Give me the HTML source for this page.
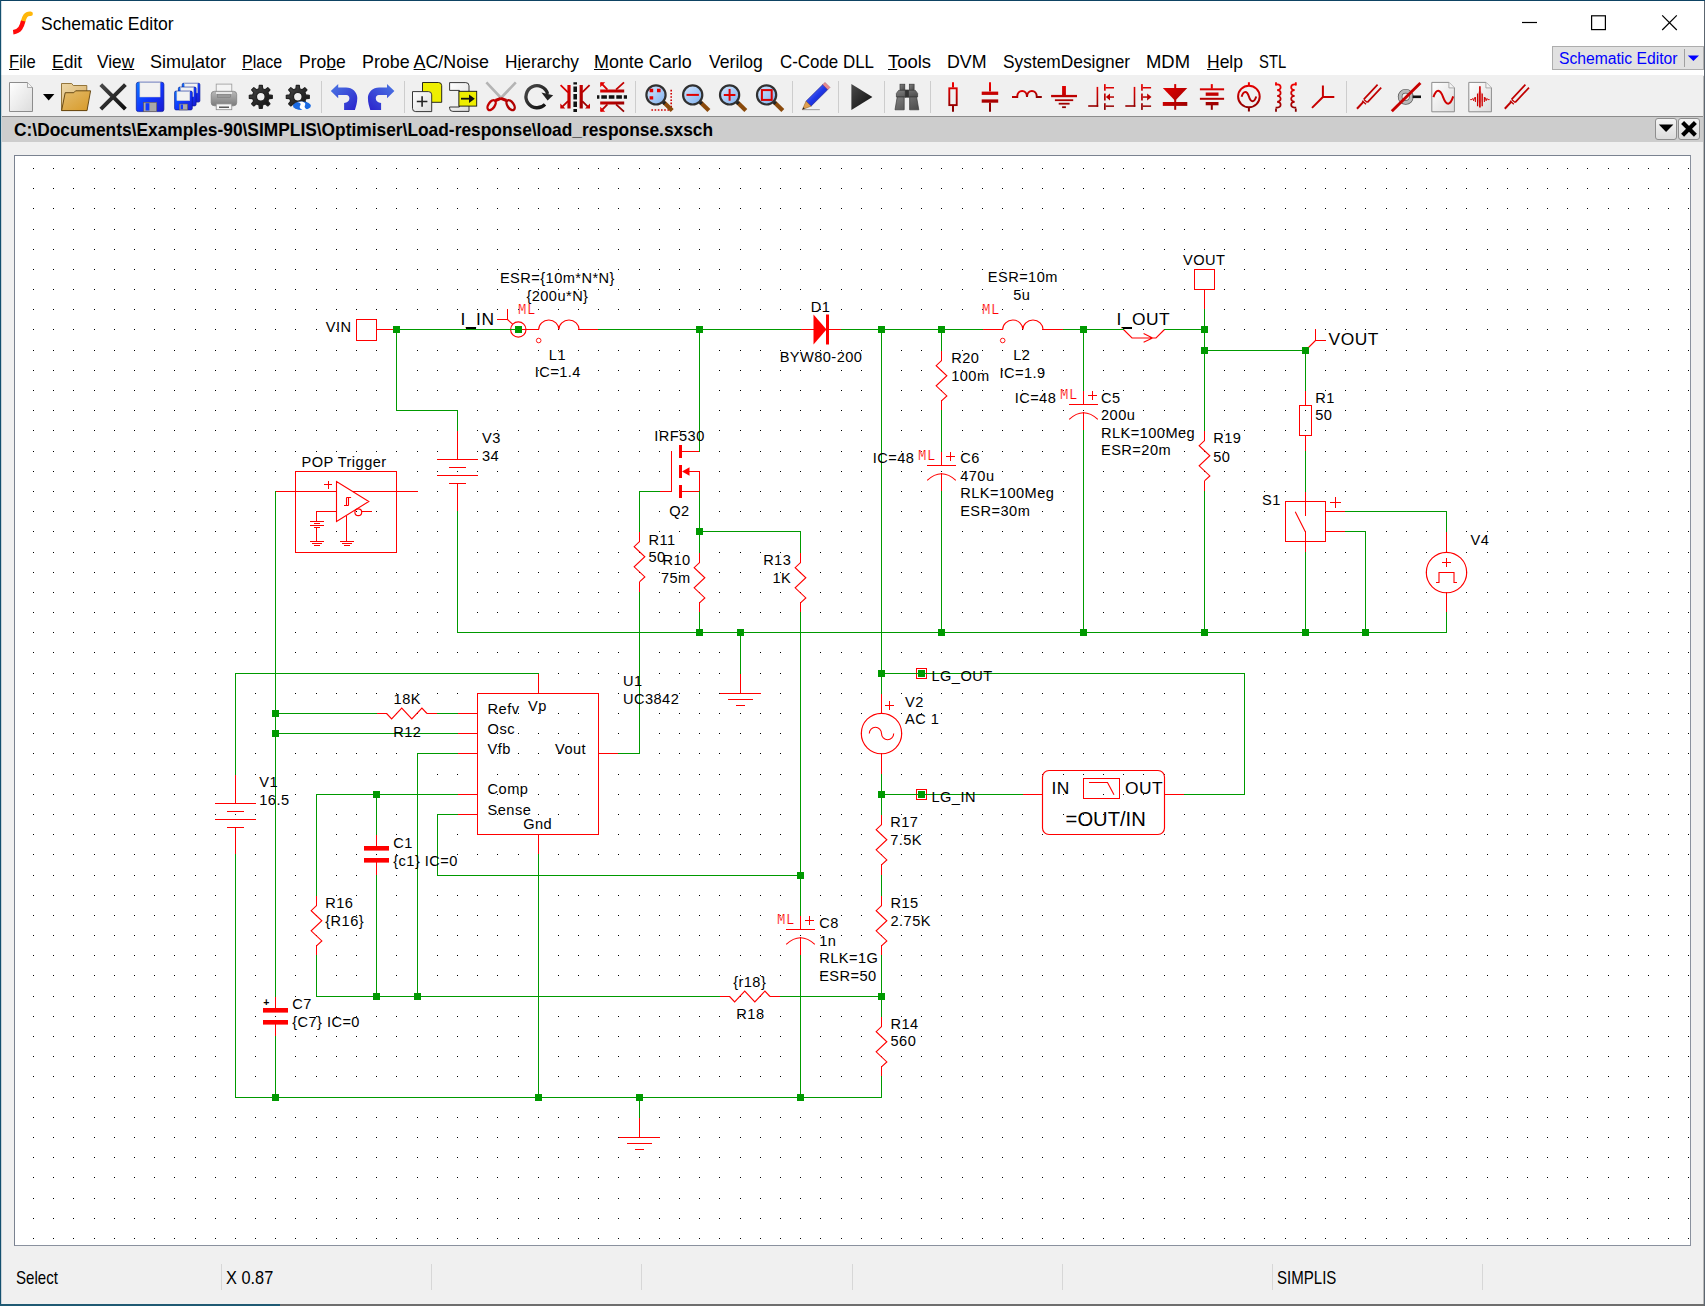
<!DOCTYPE html>
<html><head><meta charset="utf-8"><title>Schematic Editor</title>
<style>
html,body{margin:0;padding:0}
body{width:1705px;height:1306px;position:relative;overflow:hidden;background:#f0f0f0;font-family:"Liberation Sans",sans-serif;color:#000}
.abs{position:absolute}
#titlebar{left:0;top:0;width:1705px;height:43px;background:#fff}
#menubar{left:0;top:43px;width:1705px;height:32px;background:#fff;font-size:18.2px}
#menubar span{position:absolute;top:10px;white-space:nowrap;line-height:20px}
u{text-decoration:underline;text-underline-offset:1.2px;text-decoration-thickness:1px}
#toolbar{left:0;top:75px;width:1705px;height:41px;background:#f0f0f0}
#tabbar{left:2px;top:116px;width:1702px;height:26px;background:#cdcdcd;border-top:1px solid #8c8c8c;box-sizing:border-box}
#canvas{left:14px;top:155px;width:1675px;height:1089px;background:#fff;border:1px solid #7a8290;border-right-color:#8a919e;border-bottom-color:#8a919e}
#status{left:0;top:1246px;width:1705px;height:60px;font-size:16.2px}
#status span{position:absolute;top:27px;line-height:20px}
.sep{position:absolute;top:1264px;width:1px;height:26px;background:#d7d7d7}
#combo{left:1552px;top:46px;width:150px;height:22px;background:#e1e1e1;border:1px solid #adadad;box-sizing:content-box}
.tbtn{position:absolute;top:118px;width:20px;height:20px;border:1px solid #8e8e8e;border-radius:3px;background:linear-gradient(#f4f4f4,#dcdcdc);box-sizing:content-box}
svg{position:absolute;left:0;top:0}
</style></head><body>
<div id="titlebar" class="abs"></div>
<div class="abs" style="left:41.2px;top:14.0px;font-size:18.3px;line-height:20px;transform:scaleX(0.9600);transform-origin:0 0;white-space:nowrap;">Schematic Editor</div>
<div id="menubar" class="abs"></div><div class="abs" style="left:9.2px;top:51.8px;font-size:18.2px;line-height:20px;transform:scaleX(0.9104);transform-origin:0 0;white-space:nowrap;"><u>F</u>ile</div><div class="abs" style="left:51.5px;top:51.8px;font-size:18.2px;line-height:20px;transform:scaleX(0.9629);transform-origin:0 0;white-space:nowrap;"><u>E</u>dit</div><div class="abs" style="left:97.4px;top:51.8px;font-size:18.2px;line-height:20px;transform:scaleX(0.9534);transform-origin:0 0;white-space:nowrap;">Vie<u>w</u></div><div class="abs" style="left:150.4px;top:51.8px;font-size:18.2px;line-height:20px;transform:scaleX(0.9899);transform-origin:0 0;white-space:nowrap;">Simu<u>l</u>ator</div><div class="abs" style="left:242.3px;top:51.8px;font-size:18.2px;line-height:20px;transform:scaleX(0.8830);transform-origin:0 0;white-space:nowrap;"><u>P</u>lace</div><div class="abs" style="left:298.7px;top:51.8px;font-size:18.2px;line-height:20px;transform:scaleX(0.9636);transform-origin:0 0;white-space:nowrap;">Pro<u>b</u>e</div><div class="abs" style="left:361.7px;top:51.8px;font-size:18.2px;line-height:20px;transform:scaleX(0.9807);transform-origin:0 0;white-space:nowrap;">Probe <u>A</u>C/Noise</div><div class="abs" style="left:504.5px;top:51.8px;font-size:18.2px;line-height:20px;transform:scaleX(0.9502);transform-origin:0 0;white-space:nowrap;">H<u>i</u>erarchy</div><div class="abs" style="left:594.3px;top:51.8px;font-size:18.2px;line-height:20px;transform:scaleX(0.9855);transform-origin:0 0;white-space:nowrap;"><u>M</u>onte Carlo</div><div class="abs" style="left:708.8px;top:51.8px;font-size:18.2px;line-height:20px;transform:scaleX(0.9667);transform-origin:0 0;white-space:nowrap;">Verilog</div><div class="abs" style="left:779.5px;top:51.8px;font-size:18.2px;line-height:20px;transform:scaleX(0.9292);transform-origin:0 0;white-space:nowrap;">C-Code DLL</div><div class="abs" style="left:888.3px;top:51.8px;font-size:18.2px;line-height:20px;transform:scaleX(1.0144);transform-origin:0 0;white-space:nowrap;"><u>T</u>ools</div><div class="abs" style="left:946.8px;top:51.8px;font-size:18.2px;line-height:20px;transform:scaleX(0.9791);transform-origin:0 0;white-space:nowrap;">DVM</div><div class="abs" style="left:1002.8px;top:51.8px;font-size:18.2px;line-height:20px;transform:scaleX(0.9527);transform-origin:0 0;white-space:nowrap;">SystemDesigner</div><div class="abs" style="left:1146.0px;top:51.8px;font-size:18.2px;line-height:20px;transform:scaleX(1.0123);transform-origin:0 0;white-space:nowrap;">MDM</div><div class="abs" style="left:1207.0px;top:51.8px;font-size:18.2px;line-height:20px;transform:scaleX(0.9617);transform-origin:0 0;white-space:nowrap;"><u>H</u>elp</div><div class="abs" style="left:1259.2px;top:51.8px;font-size:18.2px;line-height:20px;transform:scaleX(0.8149);transform-origin:0 0;white-space:nowrap;">STL</div>
<div id="combo" class="abs"><div class="abs" style="left:131px;top:2px;width:1px;height:18px;background:#a0a0a0"></div></div><div class="abs" style="left:1559.4px;top:48.0px;font-size:17.3px;line-height:20px;transform:scaleX(0.9070);transform-origin:0 0;white-space:nowrap;color:#0000ff;">Schematic Editor</div>
<div id="toolbar" class="abs"></div>
<div id="tabbar" class="abs"></div><div class="abs" style="left:14.2px;top:119.8px;font-size:17.9px;line-height:20px;transform:scaleX(0.9699);transform-origin:0 0;white-space:nowrap;font-weight:bold;">C:\Documents\Examples-90\SIMPLIS\Optimiser\Load-response\load_response.sxsch</div>
<div class="tbtn" style="left:1655px"></div><div class="tbtn" style="left:1678px"></div>
<div id="canvas" class="abs"></div>
<div id="status" class="abs"></div><div class="abs" style="left:16.2px;top:1268.1px;font-size:17.7px;line-height:20px;transform:scaleX(0.8517);transform-origin:0 0;white-space:nowrap;">Select</div><div class="abs" style="left:225.8px;top:1268.1px;font-size:17.7px;line-height:20px;transform:scaleX(0.9243);transform-origin:0 0;white-space:nowrap;">X 0.87</div><div class="abs" style="left:1277.4px;top:1267.9px;font-size:17.7px;line-height:20px;transform:scaleX(0.8505);transform-origin:0 0;white-space:nowrap;">SIMPLIS</div>
<div class="sep" style="left:221px"></div><div class="sep" style="left:431px"></div><div class="sep" style="left:641px"></div><div class="sep" style="left:852px"></div><div class="sep" style="left:1062px"></div><div class="sep" style="left:1272px"></div><div class="sep" style="left:1482px"></div>
<svg width="1705" height="1306" viewBox="0 0 1705 1306">
<g id="schem">
<path d="M33 168.5h1m19 0h1m19 0h1m20 0h1m19 0h1m19 0h1m19 0h1m19 0h1m20 0h1m19 0h1m19 0h1m19 0h1m19 0h1m19 0h1m20 0h1m19 0h1m19 0h1m19 0h1m19 0h1m20 0h1m19 0h1m19 0h1m19 0h1m19 0h1m20 0h1m19 0h1m19 0h1m19 0h1m19 0h1m19 0h1m20 0h1m19 0h1m19 0h1m19 0h1m19 0h1m20 0h1m19 0h1m19 0h1m19 0h1m19 0h1m20 0h1m19 0h1m19 0h1m19 0h1m19 0h1m19 0h1m20 0h1m19 0h1m19 0h1m19 0h1m19 0h1m20 0h1m19 0h1m19 0h1m19 0h1m19 0h1m20 0h1m19 0h1m19 0h1m19 0h1m19 0h1m19 0h1m20 0h1m19 0h1m19 0h1m19 0h1m19 0h1m20 0h1m19 0h1m19 0h1m19 0h1m19 0h1m20 0h1m19 0h1m19 0h1m19 0h1m19 0h1m19 0h1m20 0h1m19 0h1m19 0h1m19 0h1m19 0h1M33 188.5h1m19 0h1m19 0h1m20 0h1m19 0h1m19 0h1m19 0h1m19 0h1m20 0h1m19 0h1m19 0h1m19 0h1m19 0h1m19 0h1m20 0h1m19 0h1m19 0h1m19 0h1m19 0h1m20 0h1m19 0h1m19 0h1m19 0h1m19 0h1m20 0h1m19 0h1m19 0h1m19 0h1m19 0h1m19 0h1m20 0h1m19 0h1m19 0h1m19 0h1m19 0h1m20 0h1m19 0h1m19 0h1m19 0h1m19 0h1m20 0h1m19 0h1m19 0h1m19 0h1m19 0h1m19 0h1m20 0h1m19 0h1m19 0h1m19 0h1m19 0h1m20 0h1m19 0h1m19 0h1m19 0h1m19 0h1m20 0h1m19 0h1m19 0h1m19 0h1m19 0h1m19 0h1m20 0h1m19 0h1m19 0h1m19 0h1m19 0h1m20 0h1m19 0h1m19 0h1m19 0h1m19 0h1m20 0h1m19 0h1m19 0h1m19 0h1m19 0h1m19 0h1m20 0h1m19 0h1m19 0h1m19 0h1m19 0h1M33 208.5h1m19 0h1m19 0h1m20 0h1m19 0h1m19 0h1m19 0h1m19 0h1m20 0h1m19 0h1m19 0h1m19 0h1m19 0h1m19 0h1m20 0h1m19 0h1m19 0h1m19 0h1m19 0h1m20 0h1m19 0h1m19 0h1m19 0h1m19 0h1m20 0h1m19 0h1m19 0h1m19 0h1m19 0h1m19 0h1m20 0h1m19 0h1m19 0h1m19 0h1m19 0h1m20 0h1m19 0h1m19 0h1m19 0h1m19 0h1m20 0h1m19 0h1m19 0h1m19 0h1m19 0h1m19 0h1m20 0h1m19 0h1m19 0h1m19 0h1m19 0h1m20 0h1m19 0h1m19 0h1m19 0h1m19 0h1m20 0h1m19 0h1m19 0h1m19 0h1m19 0h1m19 0h1m20 0h1m19 0h1m19 0h1m19 0h1m19 0h1m20 0h1m19 0h1m19 0h1m19 0h1m19 0h1m20 0h1m19 0h1m19 0h1m19 0h1m19 0h1m19 0h1m20 0h1m19 0h1m19 0h1m19 0h1m19 0h1M33 229.5h1m19 0h1m19 0h1m20 0h1m19 0h1m19 0h1m19 0h1m19 0h1m20 0h1m19 0h1m19 0h1m19 0h1m19 0h1m19 0h1m20 0h1m19 0h1m19 0h1m19 0h1m19 0h1m20 0h1m19 0h1m19 0h1m19 0h1m19 0h1m20 0h1m19 0h1m19 0h1m19 0h1m19 0h1m19 0h1m20 0h1m19 0h1m19 0h1m19 0h1m19 0h1m20 0h1m19 0h1m19 0h1m19 0h1m19 0h1m20 0h1m19 0h1m19 0h1m19 0h1m19 0h1m19 0h1m20 0h1m19 0h1m19 0h1m19 0h1m19 0h1m20 0h1m19 0h1m19 0h1m19 0h1m19 0h1m20 0h1m19 0h1m19 0h1m19 0h1m19 0h1m19 0h1m20 0h1m19 0h1m19 0h1m19 0h1m19 0h1m20 0h1m19 0h1m19 0h1m19 0h1m19 0h1m20 0h1m19 0h1m19 0h1m19 0h1m19 0h1m19 0h1m20 0h1m19 0h1m19 0h1m19 0h1m19 0h1M33 249.5h1m19 0h1m19 0h1m20 0h1m19 0h1m19 0h1m19 0h1m19 0h1m20 0h1m19 0h1m19 0h1m19 0h1m19 0h1m19 0h1m20 0h1m19 0h1m19 0h1m19 0h1m19 0h1m20 0h1m19 0h1m19 0h1m19 0h1m19 0h1m20 0h1m19 0h1m19 0h1m19 0h1m19 0h1m19 0h1m20 0h1m19 0h1m19 0h1m19 0h1m19 0h1m20 0h1m19 0h1m19 0h1m19 0h1m19 0h1m20 0h1m19 0h1m19 0h1m19 0h1m19 0h1m19 0h1m20 0h1m19 0h1m19 0h1m19 0h1m19 0h1m20 0h1m19 0h1m19 0h1m19 0h1m19 0h1m20 0h1m19 0h1m19 0h1m19 0h1m19 0h1m19 0h1m20 0h1m19 0h1m19 0h1m19 0h1m19 0h1m20 0h1m19 0h1m19 0h1m19 0h1m19 0h1m20 0h1m19 0h1m19 0h1m19 0h1m19 0h1m19 0h1m20 0h1m19 0h1m19 0h1m19 0h1m19 0h1M33 269.5h1m19 0h1m19 0h1m20 0h1m19 0h1m19 0h1m19 0h1m19 0h1m20 0h1m19 0h1m19 0h1m19 0h1m19 0h1m19 0h1m20 0h1m19 0h1m19 0h1m19 0h1m19 0h1m20 0h1m19 0h1m19 0h1m19 0h1m19 0h1m20 0h1m19 0h1m19 0h1m19 0h1m19 0h1m19 0h1m20 0h1m19 0h1m19 0h1m19 0h1m19 0h1m20 0h1m19 0h1m19 0h1m19 0h1m19 0h1m20 0h1m19 0h1m19 0h1m19 0h1m19 0h1m19 0h1m20 0h1m19 0h1m19 0h1m19 0h1m19 0h1m20 0h1m19 0h1m19 0h1m19 0h1m19 0h1m20 0h1m19 0h1m19 0h1m19 0h1m19 0h1m19 0h1m20 0h1m19 0h1m19 0h1m19 0h1m19 0h1m20 0h1m19 0h1m19 0h1m19 0h1m19 0h1m20 0h1m19 0h1m19 0h1m19 0h1m19 0h1m19 0h1m20 0h1m19 0h1m19 0h1m19 0h1m19 0h1M33 289.5h1m19 0h1m19 0h1m20 0h1m19 0h1m19 0h1m19 0h1m19 0h1m20 0h1m19 0h1m19 0h1m19 0h1m19 0h1m19 0h1m20 0h1m19 0h1m19 0h1m19 0h1m19 0h1m20 0h1m19 0h1m19 0h1m19 0h1m19 0h1m20 0h1m19 0h1m19 0h1m19 0h1m19 0h1m19 0h1m20 0h1m19 0h1m19 0h1m19 0h1m19 0h1m20 0h1m19 0h1m19 0h1m19 0h1m19 0h1m20 0h1m19 0h1m19 0h1m19 0h1m19 0h1m19 0h1m20 0h1m19 0h1m19 0h1m19 0h1m19 0h1m20 0h1m19 0h1m19 0h1m19 0h1m19 0h1m20 0h1m19 0h1m19 0h1m19 0h1m19 0h1m19 0h1m20 0h1m19 0h1m19 0h1m19 0h1m19 0h1m20 0h1m19 0h1m19 0h1m19 0h1m19 0h1m20 0h1m19 0h1m19 0h1m19 0h1m19 0h1m19 0h1m20 0h1m19 0h1m19 0h1m19 0h1m19 0h1M33 309.5h1m19 0h1m19 0h1m20 0h1m19 0h1m19 0h1m19 0h1m19 0h1m20 0h1m19 0h1m19 0h1m19 0h1m19 0h1m19 0h1m20 0h1m19 0h1m19 0h1m19 0h1m19 0h1m20 0h1m19 0h1m19 0h1m19 0h1m19 0h1m20 0h1m19 0h1m19 0h1m19 0h1m19 0h1m19 0h1m20 0h1m19 0h1m19 0h1m19 0h1m19 0h1m20 0h1m19 0h1m19 0h1m19 0h1m19 0h1m20 0h1m19 0h1m19 0h1m19 0h1m19 0h1m19 0h1m20 0h1m19 0h1m19 0h1m19 0h1m19 0h1m20 0h1m19 0h1m19 0h1m19 0h1m19 0h1m20 0h1m19 0h1m19 0h1m19 0h1m19 0h1m19 0h1m20 0h1m19 0h1m19 0h1m19 0h1m19 0h1m20 0h1m19 0h1m19 0h1m19 0h1m19 0h1m20 0h1m19 0h1m19 0h1m19 0h1m19 0h1m19 0h1m20 0h1m19 0h1m19 0h1m19 0h1m19 0h1M33 329.5h1m19 0h1m19 0h1m20 0h1m19 0h1m19 0h1m19 0h1m19 0h1m20 0h1m19 0h1m19 0h1m19 0h1m19 0h1m19 0h1m20 0h1m19 0h1m19 0h1m19 0h1m19 0h1m20 0h1m19 0h1m19 0h1m19 0h1m19 0h1m20 0h1m19 0h1m19 0h1m19 0h1m19 0h1m19 0h1m20 0h1m19 0h1m19 0h1m19 0h1m19 0h1m20 0h1m19 0h1m19 0h1m19 0h1m19 0h1m20 0h1m19 0h1m19 0h1m19 0h1m19 0h1m19 0h1m20 0h1m19 0h1m19 0h1m19 0h1m19 0h1m20 0h1m19 0h1m19 0h1m19 0h1m19 0h1m20 0h1m19 0h1m19 0h1m19 0h1m19 0h1m19 0h1m20 0h1m19 0h1m19 0h1m19 0h1m19 0h1m20 0h1m19 0h1m19 0h1m19 0h1m19 0h1m20 0h1m19 0h1m19 0h1m19 0h1m19 0h1m19 0h1m20 0h1m19 0h1m19 0h1m19 0h1m19 0h1M33 350.5h1m19 0h1m19 0h1m20 0h1m19 0h1m19 0h1m19 0h1m19 0h1m20 0h1m19 0h1m19 0h1m19 0h1m19 0h1m19 0h1m20 0h1m19 0h1m19 0h1m19 0h1m19 0h1m20 0h1m19 0h1m19 0h1m19 0h1m19 0h1m20 0h1m19 0h1m19 0h1m19 0h1m19 0h1m19 0h1m20 0h1m19 0h1m19 0h1m19 0h1m19 0h1m20 0h1m19 0h1m19 0h1m19 0h1m19 0h1m20 0h1m19 0h1m19 0h1m19 0h1m19 0h1m19 0h1m20 0h1m19 0h1m19 0h1m19 0h1m19 0h1m20 0h1m19 0h1m19 0h1m19 0h1m19 0h1m20 0h1m19 0h1m19 0h1m19 0h1m19 0h1m19 0h1m20 0h1m19 0h1m19 0h1m19 0h1m19 0h1m20 0h1m19 0h1m19 0h1m19 0h1m19 0h1m20 0h1m19 0h1m19 0h1m19 0h1m19 0h1m19 0h1m20 0h1m19 0h1m19 0h1m19 0h1m19 0h1M33 370.5h1m19 0h1m19 0h1m20 0h1m19 0h1m19 0h1m19 0h1m19 0h1m20 0h1m19 0h1m19 0h1m19 0h1m19 0h1m19 0h1m20 0h1m19 0h1m19 0h1m19 0h1m19 0h1m20 0h1m19 0h1m19 0h1m19 0h1m19 0h1m20 0h1m19 0h1m19 0h1m19 0h1m19 0h1m19 0h1m20 0h1m19 0h1m19 0h1m19 0h1m19 0h1m20 0h1m19 0h1m19 0h1m19 0h1m19 0h1m20 0h1m19 0h1m19 0h1m19 0h1m19 0h1m19 0h1m20 0h1m19 0h1m19 0h1m19 0h1m19 0h1m20 0h1m19 0h1m19 0h1m19 0h1m19 0h1m20 0h1m19 0h1m19 0h1m19 0h1m19 0h1m19 0h1m20 0h1m19 0h1m19 0h1m19 0h1m19 0h1m20 0h1m19 0h1m19 0h1m19 0h1m19 0h1m20 0h1m19 0h1m19 0h1m19 0h1m19 0h1m19 0h1m20 0h1m19 0h1m19 0h1m19 0h1m19 0h1M33 390.5h1m19 0h1m19 0h1m20 0h1m19 0h1m19 0h1m19 0h1m19 0h1m20 0h1m19 0h1m19 0h1m19 0h1m19 0h1m19 0h1m20 0h1m19 0h1m19 0h1m19 0h1m19 0h1m20 0h1m19 0h1m19 0h1m19 0h1m19 0h1m20 0h1m19 0h1m19 0h1m19 0h1m19 0h1m19 0h1m20 0h1m19 0h1m19 0h1m19 0h1m19 0h1m20 0h1m19 0h1m19 0h1m19 0h1m19 0h1m20 0h1m19 0h1m19 0h1m19 0h1m19 0h1m19 0h1m20 0h1m19 0h1m19 0h1m19 0h1m19 0h1m20 0h1m19 0h1m19 0h1m19 0h1m19 0h1m20 0h1m19 0h1m19 0h1m19 0h1m19 0h1m19 0h1m20 0h1m19 0h1m19 0h1m19 0h1m19 0h1m20 0h1m19 0h1m19 0h1m19 0h1m19 0h1m20 0h1m19 0h1m19 0h1m19 0h1m19 0h1m19 0h1m20 0h1m19 0h1m19 0h1m19 0h1m19 0h1M33 410.5h1m19 0h1m19 0h1m20 0h1m19 0h1m19 0h1m19 0h1m19 0h1m20 0h1m19 0h1m19 0h1m19 0h1m19 0h1m19 0h1m20 0h1m19 0h1m19 0h1m19 0h1m19 0h1m20 0h1m19 0h1m19 0h1m19 0h1m19 0h1m20 0h1m19 0h1m19 0h1m19 0h1m19 0h1m19 0h1m20 0h1m19 0h1m19 0h1m19 0h1m19 0h1m20 0h1m19 0h1m19 0h1m19 0h1m19 0h1m20 0h1m19 0h1m19 0h1m19 0h1m19 0h1m19 0h1m20 0h1m19 0h1m19 0h1m19 0h1m19 0h1m20 0h1m19 0h1m19 0h1m19 0h1m19 0h1m20 0h1m19 0h1m19 0h1m19 0h1m19 0h1m19 0h1m20 0h1m19 0h1m19 0h1m19 0h1m19 0h1m20 0h1m19 0h1m19 0h1m19 0h1m19 0h1m20 0h1m19 0h1m19 0h1m19 0h1m19 0h1m19 0h1m20 0h1m19 0h1m19 0h1m19 0h1m19 0h1M33 430.5h1m19 0h1m19 0h1m20 0h1m19 0h1m19 0h1m19 0h1m19 0h1m20 0h1m19 0h1m19 0h1m19 0h1m19 0h1m19 0h1m20 0h1m19 0h1m19 0h1m19 0h1m19 0h1m20 0h1m19 0h1m19 0h1m19 0h1m19 0h1m20 0h1m19 0h1m19 0h1m19 0h1m19 0h1m19 0h1m20 0h1m19 0h1m19 0h1m19 0h1m19 0h1m20 0h1m19 0h1m19 0h1m19 0h1m19 0h1m20 0h1m19 0h1m19 0h1m19 0h1m19 0h1m19 0h1m20 0h1m19 0h1m19 0h1m19 0h1m19 0h1m20 0h1m19 0h1m19 0h1m19 0h1m19 0h1m20 0h1m19 0h1m19 0h1m19 0h1m19 0h1m19 0h1m20 0h1m19 0h1m19 0h1m19 0h1m19 0h1m20 0h1m19 0h1m19 0h1m19 0h1m19 0h1m20 0h1m19 0h1m19 0h1m19 0h1m19 0h1m19 0h1m20 0h1m19 0h1m19 0h1m19 0h1m19 0h1M33 451.5h1m19 0h1m19 0h1m20 0h1m19 0h1m19 0h1m19 0h1m19 0h1m20 0h1m19 0h1m19 0h1m19 0h1m19 0h1m19 0h1m20 0h1m19 0h1m19 0h1m19 0h1m19 0h1m20 0h1m19 0h1m19 0h1m19 0h1m19 0h1m20 0h1m19 0h1m19 0h1m19 0h1m19 0h1m19 0h1m20 0h1m19 0h1m19 0h1m19 0h1m19 0h1m20 0h1m19 0h1m19 0h1m19 0h1m19 0h1m20 0h1m19 0h1m19 0h1m19 0h1m19 0h1m19 0h1m20 0h1m19 0h1m19 0h1m19 0h1m19 0h1m20 0h1m19 0h1m19 0h1m19 0h1m19 0h1m20 0h1m19 0h1m19 0h1m19 0h1m19 0h1m19 0h1m20 0h1m19 0h1m19 0h1m19 0h1m19 0h1m20 0h1m19 0h1m19 0h1m19 0h1m19 0h1m20 0h1m19 0h1m19 0h1m19 0h1m19 0h1m19 0h1m20 0h1m19 0h1m19 0h1m19 0h1m19 0h1M33 471.5h1m19 0h1m19 0h1m20 0h1m19 0h1m19 0h1m19 0h1m19 0h1m20 0h1m19 0h1m19 0h1m19 0h1m19 0h1m19 0h1m20 0h1m19 0h1m19 0h1m19 0h1m19 0h1m20 0h1m19 0h1m19 0h1m19 0h1m19 0h1m20 0h1m19 0h1m19 0h1m19 0h1m19 0h1m19 0h1m20 0h1m19 0h1m19 0h1m19 0h1m19 0h1m20 0h1m19 0h1m19 0h1m19 0h1m19 0h1m20 0h1m19 0h1m19 0h1m19 0h1m19 0h1m19 0h1m20 0h1m19 0h1m19 0h1m19 0h1m19 0h1m20 0h1m19 0h1m19 0h1m19 0h1m19 0h1m20 0h1m19 0h1m19 0h1m19 0h1m19 0h1m19 0h1m20 0h1m19 0h1m19 0h1m19 0h1m19 0h1m20 0h1m19 0h1m19 0h1m19 0h1m19 0h1m20 0h1m19 0h1m19 0h1m19 0h1m19 0h1m19 0h1m20 0h1m19 0h1m19 0h1m19 0h1m19 0h1M33 491.5h1m19 0h1m19 0h1m20 0h1m19 0h1m19 0h1m19 0h1m19 0h1m20 0h1m19 0h1m19 0h1m19 0h1m19 0h1m19 0h1m20 0h1m19 0h1m19 0h1m19 0h1m19 0h1m20 0h1m19 0h1m19 0h1m19 0h1m19 0h1m20 0h1m19 0h1m19 0h1m19 0h1m19 0h1m19 0h1m20 0h1m19 0h1m19 0h1m19 0h1m19 0h1m20 0h1m19 0h1m19 0h1m19 0h1m19 0h1m20 0h1m19 0h1m19 0h1m19 0h1m19 0h1m19 0h1m20 0h1m19 0h1m19 0h1m19 0h1m19 0h1m20 0h1m19 0h1m19 0h1m19 0h1m19 0h1m20 0h1m19 0h1m19 0h1m19 0h1m19 0h1m19 0h1m20 0h1m19 0h1m19 0h1m19 0h1m19 0h1m20 0h1m19 0h1m19 0h1m19 0h1m19 0h1m20 0h1m19 0h1m19 0h1m19 0h1m19 0h1m19 0h1m20 0h1m19 0h1m19 0h1m19 0h1m19 0h1M33 511.5h1m19 0h1m19 0h1m20 0h1m19 0h1m19 0h1m19 0h1m19 0h1m20 0h1m19 0h1m19 0h1m19 0h1m19 0h1m19 0h1m20 0h1m19 0h1m19 0h1m19 0h1m19 0h1m20 0h1m19 0h1m19 0h1m19 0h1m19 0h1m20 0h1m19 0h1m19 0h1m19 0h1m19 0h1m19 0h1m20 0h1m19 0h1m19 0h1m19 0h1m19 0h1m20 0h1m19 0h1m19 0h1m19 0h1m19 0h1m20 0h1m19 0h1m19 0h1m19 0h1m19 0h1m19 0h1m20 0h1m19 0h1m19 0h1m19 0h1m19 0h1m20 0h1m19 0h1m19 0h1m19 0h1m19 0h1m20 0h1m19 0h1m19 0h1m19 0h1m19 0h1m19 0h1m20 0h1m19 0h1m19 0h1m19 0h1m19 0h1m20 0h1m19 0h1m19 0h1m19 0h1m19 0h1m20 0h1m19 0h1m19 0h1m19 0h1m19 0h1m19 0h1m20 0h1m19 0h1m19 0h1m19 0h1m19 0h1M33 531.5h1m19 0h1m19 0h1m20 0h1m19 0h1m19 0h1m19 0h1m19 0h1m20 0h1m19 0h1m19 0h1m19 0h1m19 0h1m19 0h1m20 0h1m19 0h1m19 0h1m19 0h1m19 0h1m20 0h1m19 0h1m19 0h1m19 0h1m19 0h1m20 0h1m19 0h1m19 0h1m19 0h1m19 0h1m19 0h1m20 0h1m19 0h1m19 0h1m19 0h1m19 0h1m20 0h1m19 0h1m19 0h1m19 0h1m19 0h1m20 0h1m19 0h1m19 0h1m19 0h1m19 0h1m19 0h1m20 0h1m19 0h1m19 0h1m19 0h1m19 0h1m20 0h1m19 0h1m19 0h1m19 0h1m19 0h1m20 0h1m19 0h1m19 0h1m19 0h1m19 0h1m19 0h1m20 0h1m19 0h1m19 0h1m19 0h1m19 0h1m20 0h1m19 0h1m19 0h1m19 0h1m19 0h1m20 0h1m19 0h1m19 0h1m19 0h1m19 0h1m19 0h1m20 0h1m19 0h1m19 0h1m19 0h1m19 0h1M33 552.5h1m19 0h1m19 0h1m20 0h1m19 0h1m19 0h1m19 0h1m19 0h1m20 0h1m19 0h1m19 0h1m19 0h1m19 0h1m19 0h1m20 0h1m19 0h1m19 0h1m19 0h1m19 0h1m20 0h1m19 0h1m19 0h1m19 0h1m19 0h1m20 0h1m19 0h1m19 0h1m19 0h1m19 0h1m19 0h1m20 0h1m19 0h1m19 0h1m19 0h1m19 0h1m20 0h1m19 0h1m19 0h1m19 0h1m19 0h1m20 0h1m19 0h1m19 0h1m19 0h1m19 0h1m19 0h1m20 0h1m19 0h1m19 0h1m19 0h1m19 0h1m20 0h1m19 0h1m19 0h1m19 0h1m19 0h1m20 0h1m19 0h1m19 0h1m19 0h1m19 0h1m19 0h1m20 0h1m19 0h1m19 0h1m19 0h1m19 0h1m20 0h1m19 0h1m19 0h1m19 0h1m19 0h1m20 0h1m19 0h1m19 0h1m19 0h1m19 0h1m19 0h1m20 0h1m19 0h1m19 0h1m19 0h1m19 0h1M33 572.5h1m19 0h1m19 0h1m20 0h1m19 0h1m19 0h1m19 0h1m19 0h1m20 0h1m19 0h1m19 0h1m19 0h1m19 0h1m19 0h1m20 0h1m19 0h1m19 0h1m19 0h1m19 0h1m20 0h1m19 0h1m19 0h1m19 0h1m19 0h1m20 0h1m19 0h1m19 0h1m19 0h1m19 0h1m19 0h1m20 0h1m19 0h1m19 0h1m19 0h1m19 0h1m20 0h1m19 0h1m19 0h1m19 0h1m19 0h1m20 0h1m19 0h1m19 0h1m19 0h1m19 0h1m19 0h1m20 0h1m19 0h1m19 0h1m19 0h1m19 0h1m20 0h1m19 0h1m19 0h1m19 0h1m19 0h1m20 0h1m19 0h1m19 0h1m19 0h1m19 0h1m19 0h1m20 0h1m19 0h1m19 0h1m19 0h1m19 0h1m20 0h1m19 0h1m19 0h1m19 0h1m19 0h1m20 0h1m19 0h1m19 0h1m19 0h1m19 0h1m19 0h1m20 0h1m19 0h1m19 0h1m19 0h1m19 0h1M33 592.5h1m19 0h1m19 0h1m20 0h1m19 0h1m19 0h1m19 0h1m19 0h1m20 0h1m19 0h1m19 0h1m19 0h1m19 0h1m19 0h1m20 0h1m19 0h1m19 0h1m19 0h1m19 0h1m20 0h1m19 0h1m19 0h1m19 0h1m19 0h1m20 0h1m19 0h1m19 0h1m19 0h1m19 0h1m19 0h1m20 0h1m19 0h1m19 0h1m19 0h1m19 0h1m20 0h1m19 0h1m19 0h1m19 0h1m19 0h1m20 0h1m19 0h1m19 0h1m19 0h1m19 0h1m19 0h1m20 0h1m19 0h1m19 0h1m19 0h1m19 0h1m20 0h1m19 0h1m19 0h1m19 0h1m19 0h1m20 0h1m19 0h1m19 0h1m19 0h1m19 0h1m19 0h1m20 0h1m19 0h1m19 0h1m19 0h1m19 0h1m20 0h1m19 0h1m19 0h1m19 0h1m19 0h1m20 0h1m19 0h1m19 0h1m19 0h1m19 0h1m19 0h1m20 0h1m19 0h1m19 0h1m19 0h1m19 0h1M33 612.5h1m19 0h1m19 0h1m20 0h1m19 0h1m19 0h1m19 0h1m19 0h1m20 0h1m19 0h1m19 0h1m19 0h1m19 0h1m19 0h1m20 0h1m19 0h1m19 0h1m19 0h1m19 0h1m20 0h1m19 0h1m19 0h1m19 0h1m19 0h1m20 0h1m19 0h1m19 0h1m19 0h1m19 0h1m19 0h1m20 0h1m19 0h1m19 0h1m19 0h1m19 0h1m20 0h1m19 0h1m19 0h1m19 0h1m19 0h1m20 0h1m19 0h1m19 0h1m19 0h1m19 0h1m19 0h1m20 0h1m19 0h1m19 0h1m19 0h1m19 0h1m20 0h1m19 0h1m19 0h1m19 0h1m19 0h1m20 0h1m19 0h1m19 0h1m19 0h1m19 0h1m19 0h1m20 0h1m19 0h1m19 0h1m19 0h1m19 0h1m20 0h1m19 0h1m19 0h1m19 0h1m19 0h1m20 0h1m19 0h1m19 0h1m19 0h1m19 0h1m19 0h1m20 0h1m19 0h1m19 0h1m19 0h1m19 0h1M33 632.5h1m19 0h1m19 0h1m20 0h1m19 0h1m19 0h1m19 0h1m19 0h1m20 0h1m19 0h1m19 0h1m19 0h1m19 0h1m19 0h1m20 0h1m19 0h1m19 0h1m19 0h1m19 0h1m20 0h1m19 0h1m19 0h1m19 0h1m19 0h1m20 0h1m19 0h1m19 0h1m19 0h1m19 0h1m19 0h1m20 0h1m19 0h1m19 0h1m19 0h1m19 0h1m20 0h1m19 0h1m19 0h1m19 0h1m19 0h1m20 0h1m19 0h1m19 0h1m19 0h1m19 0h1m19 0h1m20 0h1m19 0h1m19 0h1m19 0h1m19 0h1m20 0h1m19 0h1m19 0h1m19 0h1m19 0h1m20 0h1m19 0h1m19 0h1m19 0h1m19 0h1m19 0h1m20 0h1m19 0h1m19 0h1m19 0h1m19 0h1m20 0h1m19 0h1m19 0h1m19 0h1m19 0h1m20 0h1m19 0h1m19 0h1m19 0h1m19 0h1m19 0h1m20 0h1m19 0h1m19 0h1m19 0h1m19 0h1M33 652.5h1m19 0h1m19 0h1m20 0h1m19 0h1m19 0h1m19 0h1m19 0h1m20 0h1m19 0h1m19 0h1m19 0h1m19 0h1m19 0h1m20 0h1m19 0h1m19 0h1m19 0h1m19 0h1m20 0h1m19 0h1m19 0h1m19 0h1m19 0h1m20 0h1m19 0h1m19 0h1m19 0h1m19 0h1m19 0h1m20 0h1m19 0h1m19 0h1m19 0h1m19 0h1m20 0h1m19 0h1m19 0h1m19 0h1m19 0h1m20 0h1m19 0h1m19 0h1m19 0h1m19 0h1m19 0h1m20 0h1m19 0h1m19 0h1m19 0h1m19 0h1m20 0h1m19 0h1m19 0h1m19 0h1m19 0h1m20 0h1m19 0h1m19 0h1m19 0h1m19 0h1m19 0h1m20 0h1m19 0h1m19 0h1m19 0h1m19 0h1m20 0h1m19 0h1m19 0h1m19 0h1m19 0h1m20 0h1m19 0h1m19 0h1m19 0h1m19 0h1m19 0h1m20 0h1m19 0h1m19 0h1m19 0h1m19 0h1M33 673.5h1m19 0h1m19 0h1m20 0h1m19 0h1m19 0h1m19 0h1m19 0h1m20 0h1m19 0h1m19 0h1m19 0h1m19 0h1m19 0h1m20 0h1m19 0h1m19 0h1m19 0h1m19 0h1m20 0h1m19 0h1m19 0h1m19 0h1m19 0h1m20 0h1m19 0h1m19 0h1m19 0h1m19 0h1m19 0h1m20 0h1m19 0h1m19 0h1m19 0h1m19 0h1m20 0h1m19 0h1m19 0h1m19 0h1m19 0h1m20 0h1m19 0h1m19 0h1m19 0h1m19 0h1m19 0h1m20 0h1m19 0h1m19 0h1m19 0h1m19 0h1m20 0h1m19 0h1m19 0h1m19 0h1m19 0h1m20 0h1m19 0h1m19 0h1m19 0h1m19 0h1m19 0h1m20 0h1m19 0h1m19 0h1m19 0h1m19 0h1m20 0h1m19 0h1m19 0h1m19 0h1m19 0h1m20 0h1m19 0h1m19 0h1m19 0h1m19 0h1m19 0h1m20 0h1m19 0h1m19 0h1m19 0h1m19 0h1M33 693.5h1m19 0h1m19 0h1m20 0h1m19 0h1m19 0h1m19 0h1m19 0h1m20 0h1m19 0h1m19 0h1m19 0h1m19 0h1m19 0h1m20 0h1m19 0h1m19 0h1m19 0h1m19 0h1m20 0h1m19 0h1m19 0h1m19 0h1m19 0h1m20 0h1m19 0h1m19 0h1m19 0h1m19 0h1m19 0h1m20 0h1m19 0h1m19 0h1m19 0h1m19 0h1m20 0h1m19 0h1m19 0h1m19 0h1m19 0h1m20 0h1m19 0h1m19 0h1m19 0h1m19 0h1m19 0h1m20 0h1m19 0h1m19 0h1m19 0h1m19 0h1m20 0h1m19 0h1m19 0h1m19 0h1m19 0h1m20 0h1m19 0h1m19 0h1m19 0h1m19 0h1m19 0h1m20 0h1m19 0h1m19 0h1m19 0h1m19 0h1m20 0h1m19 0h1m19 0h1m19 0h1m19 0h1m20 0h1m19 0h1m19 0h1m19 0h1m19 0h1m19 0h1m20 0h1m19 0h1m19 0h1m19 0h1m19 0h1M33 713.5h1m19 0h1m19 0h1m20 0h1m19 0h1m19 0h1m19 0h1m19 0h1m20 0h1m19 0h1m19 0h1m19 0h1m19 0h1m19 0h1m20 0h1m19 0h1m19 0h1m19 0h1m19 0h1m20 0h1m19 0h1m19 0h1m19 0h1m19 0h1m20 0h1m19 0h1m19 0h1m19 0h1m19 0h1m19 0h1m20 0h1m19 0h1m19 0h1m19 0h1m19 0h1m20 0h1m19 0h1m19 0h1m19 0h1m19 0h1m20 0h1m19 0h1m19 0h1m19 0h1m19 0h1m19 0h1m20 0h1m19 0h1m19 0h1m19 0h1m19 0h1m20 0h1m19 0h1m19 0h1m19 0h1m19 0h1m20 0h1m19 0h1m19 0h1m19 0h1m19 0h1m19 0h1m20 0h1m19 0h1m19 0h1m19 0h1m19 0h1m20 0h1m19 0h1m19 0h1m19 0h1m19 0h1m20 0h1m19 0h1m19 0h1m19 0h1m19 0h1m19 0h1m20 0h1m19 0h1m19 0h1m19 0h1m19 0h1M33 733.5h1m19 0h1m19 0h1m20 0h1m19 0h1m19 0h1m19 0h1m19 0h1m20 0h1m19 0h1m19 0h1m19 0h1m19 0h1m19 0h1m20 0h1m19 0h1m19 0h1m19 0h1m19 0h1m20 0h1m19 0h1m19 0h1m19 0h1m19 0h1m20 0h1m19 0h1m19 0h1m19 0h1m19 0h1m19 0h1m20 0h1m19 0h1m19 0h1m19 0h1m19 0h1m20 0h1m19 0h1m19 0h1m19 0h1m19 0h1m20 0h1m19 0h1m19 0h1m19 0h1m19 0h1m19 0h1m20 0h1m19 0h1m19 0h1m19 0h1m19 0h1m20 0h1m19 0h1m19 0h1m19 0h1m19 0h1m20 0h1m19 0h1m19 0h1m19 0h1m19 0h1m19 0h1m20 0h1m19 0h1m19 0h1m19 0h1m19 0h1m20 0h1m19 0h1m19 0h1m19 0h1m19 0h1m20 0h1m19 0h1m19 0h1m19 0h1m19 0h1m19 0h1m20 0h1m19 0h1m19 0h1m19 0h1m19 0h1M33 753.5h1m19 0h1m19 0h1m20 0h1m19 0h1m19 0h1m19 0h1m19 0h1m20 0h1m19 0h1m19 0h1m19 0h1m19 0h1m19 0h1m20 0h1m19 0h1m19 0h1m19 0h1m19 0h1m20 0h1m19 0h1m19 0h1m19 0h1m19 0h1m20 0h1m19 0h1m19 0h1m19 0h1m19 0h1m19 0h1m20 0h1m19 0h1m19 0h1m19 0h1m19 0h1m20 0h1m19 0h1m19 0h1m19 0h1m19 0h1m20 0h1m19 0h1m19 0h1m19 0h1m19 0h1m19 0h1m20 0h1m19 0h1m19 0h1m19 0h1m19 0h1m20 0h1m19 0h1m19 0h1m19 0h1m19 0h1m20 0h1m19 0h1m19 0h1m19 0h1m19 0h1m19 0h1m20 0h1m19 0h1m19 0h1m19 0h1m19 0h1m20 0h1m19 0h1m19 0h1m19 0h1m19 0h1m20 0h1m19 0h1m19 0h1m19 0h1m19 0h1m19 0h1m20 0h1m19 0h1m19 0h1m19 0h1m19 0h1M33 774.5h1m19 0h1m19 0h1m20 0h1m19 0h1m19 0h1m19 0h1m19 0h1m20 0h1m19 0h1m19 0h1m19 0h1m19 0h1m19 0h1m20 0h1m19 0h1m19 0h1m19 0h1m19 0h1m20 0h1m19 0h1m19 0h1m19 0h1m19 0h1m20 0h1m19 0h1m19 0h1m19 0h1m19 0h1m19 0h1m20 0h1m19 0h1m19 0h1m19 0h1m19 0h1m20 0h1m19 0h1m19 0h1m19 0h1m19 0h1m20 0h1m19 0h1m19 0h1m19 0h1m19 0h1m19 0h1m20 0h1m19 0h1m19 0h1m19 0h1m19 0h1m20 0h1m19 0h1m19 0h1m19 0h1m19 0h1m20 0h1m19 0h1m19 0h1m19 0h1m19 0h1m19 0h1m20 0h1m19 0h1m19 0h1m19 0h1m19 0h1m20 0h1m19 0h1m19 0h1m19 0h1m19 0h1m20 0h1m19 0h1m19 0h1m19 0h1m19 0h1m19 0h1m20 0h1m19 0h1m19 0h1m19 0h1m19 0h1M33 794.5h1m19 0h1m19 0h1m20 0h1m19 0h1m19 0h1m19 0h1m19 0h1m20 0h1m19 0h1m19 0h1m19 0h1m19 0h1m19 0h1m20 0h1m19 0h1m19 0h1m19 0h1m19 0h1m20 0h1m19 0h1m19 0h1m19 0h1m19 0h1m20 0h1m19 0h1m19 0h1m19 0h1m19 0h1m19 0h1m20 0h1m19 0h1m19 0h1m19 0h1m19 0h1m20 0h1m19 0h1m19 0h1m19 0h1m19 0h1m20 0h1m19 0h1m19 0h1m19 0h1m19 0h1m19 0h1m20 0h1m19 0h1m19 0h1m19 0h1m19 0h1m20 0h1m19 0h1m19 0h1m19 0h1m19 0h1m20 0h1m19 0h1m19 0h1m19 0h1m19 0h1m19 0h1m20 0h1m19 0h1m19 0h1m19 0h1m19 0h1m20 0h1m19 0h1m19 0h1m19 0h1m19 0h1m20 0h1m19 0h1m19 0h1m19 0h1m19 0h1m19 0h1m20 0h1m19 0h1m19 0h1m19 0h1m19 0h1M33 814.5h1m19 0h1m19 0h1m20 0h1m19 0h1m19 0h1m19 0h1m19 0h1m20 0h1m19 0h1m19 0h1m19 0h1m19 0h1m19 0h1m20 0h1m19 0h1m19 0h1m19 0h1m19 0h1m20 0h1m19 0h1m19 0h1m19 0h1m19 0h1m20 0h1m19 0h1m19 0h1m19 0h1m19 0h1m19 0h1m20 0h1m19 0h1m19 0h1m19 0h1m19 0h1m20 0h1m19 0h1m19 0h1m19 0h1m19 0h1m20 0h1m19 0h1m19 0h1m19 0h1m19 0h1m19 0h1m20 0h1m19 0h1m19 0h1m19 0h1m19 0h1m20 0h1m19 0h1m19 0h1m19 0h1m19 0h1m20 0h1m19 0h1m19 0h1m19 0h1m19 0h1m19 0h1m20 0h1m19 0h1m19 0h1m19 0h1m19 0h1m20 0h1m19 0h1m19 0h1m19 0h1m19 0h1m20 0h1m19 0h1m19 0h1m19 0h1m19 0h1m19 0h1m20 0h1m19 0h1m19 0h1m19 0h1m19 0h1M33 834.5h1m19 0h1m19 0h1m20 0h1m19 0h1m19 0h1m19 0h1m19 0h1m20 0h1m19 0h1m19 0h1m19 0h1m19 0h1m19 0h1m20 0h1m19 0h1m19 0h1m19 0h1m19 0h1m20 0h1m19 0h1m19 0h1m19 0h1m19 0h1m20 0h1m19 0h1m19 0h1m19 0h1m19 0h1m19 0h1m20 0h1m19 0h1m19 0h1m19 0h1m19 0h1m20 0h1m19 0h1m19 0h1m19 0h1m19 0h1m20 0h1m19 0h1m19 0h1m19 0h1m19 0h1m19 0h1m20 0h1m19 0h1m19 0h1m19 0h1m19 0h1m20 0h1m19 0h1m19 0h1m19 0h1m19 0h1m20 0h1m19 0h1m19 0h1m19 0h1m19 0h1m19 0h1m20 0h1m19 0h1m19 0h1m19 0h1m19 0h1m20 0h1m19 0h1m19 0h1m19 0h1m19 0h1m20 0h1m19 0h1m19 0h1m19 0h1m19 0h1m19 0h1m20 0h1m19 0h1m19 0h1m19 0h1m19 0h1M33 854.5h1m19 0h1m19 0h1m20 0h1m19 0h1m19 0h1m19 0h1m19 0h1m20 0h1m19 0h1m19 0h1m19 0h1m19 0h1m19 0h1m20 0h1m19 0h1m19 0h1m19 0h1m19 0h1m20 0h1m19 0h1m19 0h1m19 0h1m19 0h1m20 0h1m19 0h1m19 0h1m19 0h1m19 0h1m19 0h1m20 0h1m19 0h1m19 0h1m19 0h1m19 0h1m20 0h1m19 0h1m19 0h1m19 0h1m19 0h1m20 0h1m19 0h1m19 0h1m19 0h1m19 0h1m19 0h1m20 0h1m19 0h1m19 0h1m19 0h1m19 0h1m20 0h1m19 0h1m19 0h1m19 0h1m19 0h1m20 0h1m19 0h1m19 0h1m19 0h1m19 0h1m19 0h1m20 0h1m19 0h1m19 0h1m19 0h1m19 0h1m20 0h1m19 0h1m19 0h1m19 0h1m19 0h1m20 0h1m19 0h1m19 0h1m19 0h1m19 0h1m19 0h1m20 0h1m19 0h1m19 0h1m19 0h1m19 0h1M33 875.5h1m19 0h1m19 0h1m20 0h1m19 0h1m19 0h1m19 0h1m19 0h1m20 0h1m19 0h1m19 0h1m19 0h1m19 0h1m19 0h1m20 0h1m19 0h1m19 0h1m19 0h1m19 0h1m20 0h1m19 0h1m19 0h1m19 0h1m19 0h1m20 0h1m19 0h1m19 0h1m19 0h1m19 0h1m19 0h1m20 0h1m19 0h1m19 0h1m19 0h1m19 0h1m20 0h1m19 0h1m19 0h1m19 0h1m19 0h1m20 0h1m19 0h1m19 0h1m19 0h1m19 0h1m19 0h1m20 0h1m19 0h1m19 0h1m19 0h1m19 0h1m20 0h1m19 0h1m19 0h1m19 0h1m19 0h1m20 0h1m19 0h1m19 0h1m19 0h1m19 0h1m19 0h1m20 0h1m19 0h1m19 0h1m19 0h1m19 0h1m20 0h1m19 0h1m19 0h1m19 0h1m19 0h1m20 0h1m19 0h1m19 0h1m19 0h1m19 0h1m19 0h1m20 0h1m19 0h1m19 0h1m19 0h1m19 0h1M33 895.5h1m19 0h1m19 0h1m20 0h1m19 0h1m19 0h1m19 0h1m19 0h1m20 0h1m19 0h1m19 0h1m19 0h1m19 0h1m19 0h1m20 0h1m19 0h1m19 0h1m19 0h1m19 0h1m20 0h1m19 0h1m19 0h1m19 0h1m19 0h1m20 0h1m19 0h1m19 0h1m19 0h1m19 0h1m19 0h1m20 0h1m19 0h1m19 0h1m19 0h1m19 0h1m20 0h1m19 0h1m19 0h1m19 0h1m19 0h1m20 0h1m19 0h1m19 0h1m19 0h1m19 0h1m19 0h1m20 0h1m19 0h1m19 0h1m19 0h1m19 0h1m20 0h1m19 0h1m19 0h1m19 0h1m19 0h1m20 0h1m19 0h1m19 0h1m19 0h1m19 0h1m19 0h1m20 0h1m19 0h1m19 0h1m19 0h1m19 0h1m20 0h1m19 0h1m19 0h1m19 0h1m19 0h1m20 0h1m19 0h1m19 0h1m19 0h1m19 0h1m19 0h1m20 0h1m19 0h1m19 0h1m19 0h1m19 0h1M33 915.5h1m19 0h1m19 0h1m20 0h1m19 0h1m19 0h1m19 0h1m19 0h1m20 0h1m19 0h1m19 0h1m19 0h1m19 0h1m19 0h1m20 0h1m19 0h1m19 0h1m19 0h1m19 0h1m20 0h1m19 0h1m19 0h1m19 0h1m19 0h1m20 0h1m19 0h1m19 0h1m19 0h1m19 0h1m19 0h1m20 0h1m19 0h1m19 0h1m19 0h1m19 0h1m20 0h1m19 0h1m19 0h1m19 0h1m19 0h1m20 0h1m19 0h1m19 0h1m19 0h1m19 0h1m19 0h1m20 0h1m19 0h1m19 0h1m19 0h1m19 0h1m20 0h1m19 0h1m19 0h1m19 0h1m19 0h1m20 0h1m19 0h1m19 0h1m19 0h1m19 0h1m19 0h1m20 0h1m19 0h1m19 0h1m19 0h1m19 0h1m20 0h1m19 0h1m19 0h1m19 0h1m19 0h1m20 0h1m19 0h1m19 0h1m19 0h1m19 0h1m19 0h1m20 0h1m19 0h1m19 0h1m19 0h1m19 0h1M33 935.5h1m19 0h1m19 0h1m20 0h1m19 0h1m19 0h1m19 0h1m19 0h1m20 0h1m19 0h1m19 0h1m19 0h1m19 0h1m19 0h1m20 0h1m19 0h1m19 0h1m19 0h1m19 0h1m20 0h1m19 0h1m19 0h1m19 0h1m19 0h1m20 0h1m19 0h1m19 0h1m19 0h1m19 0h1m19 0h1m20 0h1m19 0h1m19 0h1m19 0h1m19 0h1m20 0h1m19 0h1m19 0h1m19 0h1m19 0h1m20 0h1m19 0h1m19 0h1m19 0h1m19 0h1m19 0h1m20 0h1m19 0h1m19 0h1m19 0h1m19 0h1m20 0h1m19 0h1m19 0h1m19 0h1m19 0h1m20 0h1m19 0h1m19 0h1m19 0h1m19 0h1m19 0h1m20 0h1m19 0h1m19 0h1m19 0h1m19 0h1m20 0h1m19 0h1m19 0h1m19 0h1m19 0h1m20 0h1m19 0h1m19 0h1m19 0h1m19 0h1m19 0h1m20 0h1m19 0h1m19 0h1m19 0h1m19 0h1M33 955.5h1m19 0h1m19 0h1m20 0h1m19 0h1m19 0h1m19 0h1m19 0h1m20 0h1m19 0h1m19 0h1m19 0h1m19 0h1m19 0h1m20 0h1m19 0h1m19 0h1m19 0h1m19 0h1m20 0h1m19 0h1m19 0h1m19 0h1m19 0h1m20 0h1m19 0h1m19 0h1m19 0h1m19 0h1m19 0h1m20 0h1m19 0h1m19 0h1m19 0h1m19 0h1m20 0h1m19 0h1m19 0h1m19 0h1m19 0h1m20 0h1m19 0h1m19 0h1m19 0h1m19 0h1m19 0h1m20 0h1m19 0h1m19 0h1m19 0h1m19 0h1m20 0h1m19 0h1m19 0h1m19 0h1m19 0h1m20 0h1m19 0h1m19 0h1m19 0h1m19 0h1m19 0h1m20 0h1m19 0h1m19 0h1m19 0h1m19 0h1m20 0h1m19 0h1m19 0h1m19 0h1m19 0h1m20 0h1m19 0h1m19 0h1m19 0h1m19 0h1m19 0h1m20 0h1m19 0h1m19 0h1m19 0h1m19 0h1M33 975.5h1m19 0h1m19 0h1m20 0h1m19 0h1m19 0h1m19 0h1m19 0h1m20 0h1m19 0h1m19 0h1m19 0h1m19 0h1m19 0h1m20 0h1m19 0h1m19 0h1m19 0h1m19 0h1m20 0h1m19 0h1m19 0h1m19 0h1m19 0h1m20 0h1m19 0h1m19 0h1m19 0h1m19 0h1m19 0h1m20 0h1m19 0h1m19 0h1m19 0h1m19 0h1m20 0h1m19 0h1m19 0h1m19 0h1m19 0h1m20 0h1m19 0h1m19 0h1m19 0h1m19 0h1m19 0h1m20 0h1m19 0h1m19 0h1m19 0h1m19 0h1m20 0h1m19 0h1m19 0h1m19 0h1m19 0h1m20 0h1m19 0h1m19 0h1m19 0h1m19 0h1m19 0h1m20 0h1m19 0h1m19 0h1m19 0h1m19 0h1m20 0h1m19 0h1m19 0h1m19 0h1m19 0h1m20 0h1m19 0h1m19 0h1m19 0h1m19 0h1m19 0h1m20 0h1m19 0h1m19 0h1m19 0h1m19 0h1M33 996.5h1m19 0h1m19 0h1m20 0h1m19 0h1m19 0h1m19 0h1m19 0h1m20 0h1m19 0h1m19 0h1m19 0h1m19 0h1m19 0h1m20 0h1m19 0h1m19 0h1m19 0h1m19 0h1m20 0h1m19 0h1m19 0h1m19 0h1m19 0h1m20 0h1m19 0h1m19 0h1m19 0h1m19 0h1m19 0h1m20 0h1m19 0h1m19 0h1m19 0h1m19 0h1m20 0h1m19 0h1m19 0h1m19 0h1m19 0h1m20 0h1m19 0h1m19 0h1m19 0h1m19 0h1m19 0h1m20 0h1m19 0h1m19 0h1m19 0h1m19 0h1m20 0h1m19 0h1m19 0h1m19 0h1m19 0h1m20 0h1m19 0h1m19 0h1m19 0h1m19 0h1m19 0h1m20 0h1m19 0h1m19 0h1m19 0h1m19 0h1m20 0h1m19 0h1m19 0h1m19 0h1m19 0h1m20 0h1m19 0h1m19 0h1m19 0h1m19 0h1m19 0h1m20 0h1m19 0h1m19 0h1m19 0h1m19 0h1M33 1016.5h1m19 0h1m19 0h1m20 0h1m19 0h1m19 0h1m19 0h1m19 0h1m20 0h1m19 0h1m19 0h1m19 0h1m19 0h1m19 0h1m20 0h1m19 0h1m19 0h1m19 0h1m19 0h1m20 0h1m19 0h1m19 0h1m19 0h1m19 0h1m20 0h1m19 0h1m19 0h1m19 0h1m19 0h1m19 0h1m20 0h1m19 0h1m19 0h1m19 0h1m19 0h1m20 0h1m19 0h1m19 0h1m19 0h1m19 0h1m20 0h1m19 0h1m19 0h1m19 0h1m19 0h1m19 0h1m20 0h1m19 0h1m19 0h1m19 0h1m19 0h1m20 0h1m19 0h1m19 0h1m19 0h1m19 0h1m20 0h1m19 0h1m19 0h1m19 0h1m19 0h1m19 0h1m20 0h1m19 0h1m19 0h1m19 0h1m19 0h1m20 0h1m19 0h1m19 0h1m19 0h1m19 0h1m20 0h1m19 0h1m19 0h1m19 0h1m19 0h1m19 0h1m20 0h1m19 0h1m19 0h1m19 0h1m19 0h1M33 1036.5h1m19 0h1m19 0h1m20 0h1m19 0h1m19 0h1m19 0h1m19 0h1m20 0h1m19 0h1m19 0h1m19 0h1m19 0h1m19 0h1m20 0h1m19 0h1m19 0h1m19 0h1m19 0h1m20 0h1m19 0h1m19 0h1m19 0h1m19 0h1m20 0h1m19 0h1m19 0h1m19 0h1m19 0h1m19 0h1m20 0h1m19 0h1m19 0h1m19 0h1m19 0h1m20 0h1m19 0h1m19 0h1m19 0h1m19 0h1m20 0h1m19 0h1m19 0h1m19 0h1m19 0h1m19 0h1m20 0h1m19 0h1m19 0h1m19 0h1m19 0h1m20 0h1m19 0h1m19 0h1m19 0h1m19 0h1m20 0h1m19 0h1m19 0h1m19 0h1m19 0h1m19 0h1m20 0h1m19 0h1m19 0h1m19 0h1m19 0h1m20 0h1m19 0h1m19 0h1m19 0h1m19 0h1m20 0h1m19 0h1m19 0h1m19 0h1m19 0h1m19 0h1m20 0h1m19 0h1m19 0h1m19 0h1m19 0h1M33 1056.5h1m19 0h1m19 0h1m20 0h1m19 0h1m19 0h1m19 0h1m19 0h1m20 0h1m19 0h1m19 0h1m19 0h1m19 0h1m19 0h1m20 0h1m19 0h1m19 0h1m19 0h1m19 0h1m20 0h1m19 0h1m19 0h1m19 0h1m19 0h1m20 0h1m19 0h1m19 0h1m19 0h1m19 0h1m19 0h1m20 0h1m19 0h1m19 0h1m19 0h1m19 0h1m20 0h1m19 0h1m19 0h1m19 0h1m19 0h1m20 0h1m19 0h1m19 0h1m19 0h1m19 0h1m19 0h1m20 0h1m19 0h1m19 0h1m19 0h1m19 0h1m20 0h1m19 0h1m19 0h1m19 0h1m19 0h1m20 0h1m19 0h1m19 0h1m19 0h1m19 0h1m19 0h1m20 0h1m19 0h1m19 0h1m19 0h1m19 0h1m20 0h1m19 0h1m19 0h1m19 0h1m19 0h1m20 0h1m19 0h1m19 0h1m19 0h1m19 0h1m19 0h1m20 0h1m19 0h1m19 0h1m19 0h1m19 0h1M33 1076.5h1m19 0h1m19 0h1m20 0h1m19 0h1m19 0h1m19 0h1m19 0h1m20 0h1m19 0h1m19 0h1m19 0h1m19 0h1m19 0h1m20 0h1m19 0h1m19 0h1m19 0h1m19 0h1m20 0h1m19 0h1m19 0h1m19 0h1m19 0h1m20 0h1m19 0h1m19 0h1m19 0h1m19 0h1m19 0h1m20 0h1m19 0h1m19 0h1m19 0h1m19 0h1m20 0h1m19 0h1m19 0h1m19 0h1m19 0h1m20 0h1m19 0h1m19 0h1m19 0h1m19 0h1m19 0h1m20 0h1m19 0h1m19 0h1m19 0h1m19 0h1m20 0h1m19 0h1m19 0h1m19 0h1m19 0h1m20 0h1m19 0h1m19 0h1m19 0h1m19 0h1m19 0h1m20 0h1m19 0h1m19 0h1m19 0h1m19 0h1m20 0h1m19 0h1m19 0h1m19 0h1m19 0h1m20 0h1m19 0h1m19 0h1m19 0h1m19 0h1m19 0h1m20 0h1m19 0h1m19 0h1m19 0h1m19 0h1M33 1097.5h1m19 0h1m19 0h1m20 0h1m19 0h1m19 0h1m19 0h1m19 0h1m20 0h1m19 0h1m19 0h1m19 0h1m19 0h1m19 0h1m20 0h1m19 0h1m19 0h1m19 0h1m19 0h1m20 0h1m19 0h1m19 0h1m19 0h1m19 0h1m20 0h1m19 0h1m19 0h1m19 0h1m19 0h1m19 0h1m20 0h1m19 0h1m19 0h1m19 0h1m19 0h1m20 0h1m19 0h1m19 0h1m19 0h1m19 0h1m20 0h1m19 0h1m19 0h1m19 0h1m19 0h1m19 0h1m20 0h1m19 0h1m19 0h1m19 0h1m19 0h1m20 0h1m19 0h1m19 0h1m19 0h1m19 0h1m20 0h1m19 0h1m19 0h1m19 0h1m19 0h1m19 0h1m20 0h1m19 0h1m19 0h1m19 0h1m19 0h1m20 0h1m19 0h1m19 0h1m19 0h1m19 0h1m20 0h1m19 0h1m19 0h1m19 0h1m19 0h1m19 0h1m20 0h1m19 0h1m19 0h1m19 0h1m19 0h1M33 1117.5h1m19 0h1m19 0h1m20 0h1m19 0h1m19 0h1m19 0h1m19 0h1m20 0h1m19 0h1m19 0h1m19 0h1m19 0h1m19 0h1m20 0h1m19 0h1m19 0h1m19 0h1m19 0h1m20 0h1m19 0h1m19 0h1m19 0h1m19 0h1m20 0h1m19 0h1m19 0h1m19 0h1m19 0h1m19 0h1m20 0h1m19 0h1m19 0h1m19 0h1m19 0h1m20 0h1m19 0h1m19 0h1m19 0h1m19 0h1m20 0h1m19 0h1m19 0h1m19 0h1m19 0h1m19 0h1m20 0h1m19 0h1m19 0h1m19 0h1m19 0h1m20 0h1m19 0h1m19 0h1m19 0h1m19 0h1m20 0h1m19 0h1m19 0h1m19 0h1m19 0h1m19 0h1m20 0h1m19 0h1m19 0h1m19 0h1m19 0h1m20 0h1m19 0h1m19 0h1m19 0h1m19 0h1m20 0h1m19 0h1m19 0h1m19 0h1m19 0h1m19 0h1m20 0h1m19 0h1m19 0h1m19 0h1m19 0h1M33 1137.5h1m19 0h1m19 0h1m20 0h1m19 0h1m19 0h1m19 0h1m19 0h1m20 0h1m19 0h1m19 0h1m19 0h1m19 0h1m19 0h1m20 0h1m19 0h1m19 0h1m19 0h1m19 0h1m20 0h1m19 0h1m19 0h1m19 0h1m19 0h1m20 0h1m19 0h1m19 0h1m19 0h1m19 0h1m19 0h1m20 0h1m19 0h1m19 0h1m19 0h1m19 0h1m20 0h1m19 0h1m19 0h1m19 0h1m19 0h1m20 0h1m19 0h1m19 0h1m19 0h1m19 0h1m19 0h1m20 0h1m19 0h1m19 0h1m19 0h1m19 0h1m20 0h1m19 0h1m19 0h1m19 0h1m19 0h1m20 0h1m19 0h1m19 0h1m19 0h1m19 0h1m19 0h1m20 0h1m19 0h1m19 0h1m19 0h1m19 0h1m20 0h1m19 0h1m19 0h1m19 0h1m19 0h1m20 0h1m19 0h1m19 0h1m19 0h1m19 0h1m19 0h1m20 0h1m19 0h1m19 0h1m19 0h1m19 0h1M33 1157.5h1m19 0h1m19 0h1m20 0h1m19 0h1m19 0h1m19 0h1m19 0h1m20 0h1m19 0h1m19 0h1m19 0h1m19 0h1m19 0h1m20 0h1m19 0h1m19 0h1m19 0h1m19 0h1m20 0h1m19 0h1m19 0h1m19 0h1m19 0h1m20 0h1m19 0h1m19 0h1m19 0h1m19 0h1m19 0h1m20 0h1m19 0h1m19 0h1m19 0h1m19 0h1m20 0h1m19 0h1m19 0h1m19 0h1m19 0h1m20 0h1m19 0h1m19 0h1m19 0h1m19 0h1m19 0h1m20 0h1m19 0h1m19 0h1m19 0h1m19 0h1m20 0h1m19 0h1m19 0h1m19 0h1m19 0h1m20 0h1m19 0h1m19 0h1m19 0h1m19 0h1m19 0h1m20 0h1m19 0h1m19 0h1m19 0h1m19 0h1m20 0h1m19 0h1m19 0h1m19 0h1m19 0h1m20 0h1m19 0h1m19 0h1m19 0h1m19 0h1m19 0h1m20 0h1m19 0h1m19 0h1m19 0h1m19 0h1M33 1177.5h1m19 0h1m19 0h1m20 0h1m19 0h1m19 0h1m19 0h1m19 0h1m20 0h1m19 0h1m19 0h1m19 0h1m19 0h1m19 0h1m20 0h1m19 0h1m19 0h1m19 0h1m19 0h1m20 0h1m19 0h1m19 0h1m19 0h1m19 0h1m20 0h1m19 0h1m19 0h1m19 0h1m19 0h1m19 0h1m20 0h1m19 0h1m19 0h1m19 0h1m19 0h1m20 0h1m19 0h1m19 0h1m19 0h1m19 0h1m20 0h1m19 0h1m19 0h1m19 0h1m19 0h1m19 0h1m20 0h1m19 0h1m19 0h1m19 0h1m19 0h1m20 0h1m19 0h1m19 0h1m19 0h1m19 0h1m20 0h1m19 0h1m19 0h1m19 0h1m19 0h1m19 0h1m20 0h1m19 0h1m19 0h1m19 0h1m19 0h1m20 0h1m19 0h1m19 0h1m19 0h1m19 0h1m20 0h1m19 0h1m19 0h1m19 0h1m19 0h1m19 0h1m20 0h1m19 0h1m19 0h1m19 0h1m19 0h1M33 1198.5h1m19 0h1m19 0h1m20 0h1m19 0h1m19 0h1m19 0h1m19 0h1m20 0h1m19 0h1m19 0h1m19 0h1m19 0h1m19 0h1m20 0h1m19 0h1m19 0h1m19 0h1m19 0h1m20 0h1m19 0h1m19 0h1m19 0h1m19 0h1m20 0h1m19 0h1m19 0h1m19 0h1m19 0h1m19 0h1m20 0h1m19 0h1m19 0h1m19 0h1m19 0h1m20 0h1m19 0h1m19 0h1m19 0h1m19 0h1m20 0h1m19 0h1m19 0h1m19 0h1m19 0h1m19 0h1m20 0h1m19 0h1m19 0h1m19 0h1m19 0h1m20 0h1m19 0h1m19 0h1m19 0h1m19 0h1m20 0h1m19 0h1m19 0h1m19 0h1m19 0h1m19 0h1m20 0h1m19 0h1m19 0h1m19 0h1m19 0h1m20 0h1m19 0h1m19 0h1m19 0h1m19 0h1m20 0h1m19 0h1m19 0h1m19 0h1m19 0h1m19 0h1m20 0h1m19 0h1m19 0h1m19 0h1m19 0h1M33 1218.5h1m19 0h1m19 0h1m20 0h1m19 0h1m19 0h1m19 0h1m19 0h1m20 0h1m19 0h1m19 0h1m19 0h1m19 0h1m19 0h1m20 0h1m19 0h1m19 0h1m19 0h1m19 0h1m20 0h1m19 0h1m19 0h1m19 0h1m19 0h1m20 0h1m19 0h1m19 0h1m19 0h1m19 0h1m19 0h1m20 0h1m19 0h1m19 0h1m19 0h1m19 0h1m20 0h1m19 0h1m19 0h1m19 0h1m19 0h1m20 0h1m19 0h1m19 0h1m19 0h1m19 0h1m19 0h1m20 0h1m19 0h1m19 0h1m19 0h1m19 0h1m20 0h1m19 0h1m19 0h1m19 0h1m19 0h1m20 0h1m19 0h1m19 0h1m19 0h1m19 0h1m19 0h1m20 0h1m19 0h1m19 0h1m19 0h1m19 0h1m20 0h1m19 0h1m19 0h1m19 0h1m19 0h1m20 0h1m19 0h1m19 0h1m19 0h1m19 0h1m19 0h1m20 0h1m19 0h1m19 0h1m19 0h1m19 0h1M33 1238.5h1m19 0h1m19 0h1m20 0h1m19 0h1m19 0h1m19 0h1m19 0h1m20 0h1m19 0h1m19 0h1m19 0h1m19 0h1m19 0h1m20 0h1m19 0h1m19 0h1m19 0h1m19 0h1m20 0h1m19 0h1m19 0h1m19 0h1m19 0h1m20 0h1m19 0h1m19 0h1m19 0h1m19 0h1m19 0h1m20 0h1m19 0h1m19 0h1m19 0h1m19 0h1m20 0h1m19 0h1m19 0h1m19 0h1m19 0h1m20 0h1m19 0h1m19 0h1m19 0h1m19 0h1m19 0h1m20 0h1m19 0h1m19 0h1m19 0h1m19 0h1m20 0h1m19 0h1m19 0h1m19 0h1m19 0h1m20 0h1m19 0h1m19 0h1m19 0h1m19 0h1m19 0h1m20 0h1m19 0h1m19 0h1m19 0h1m19 0h1m20 0h1m19 0h1m19 0h1m19 0h1m19 0h1m20 0h1m19 0h1m19 0h1m19 0h1m19 0h1m19 0h1m20 0h1m19 0h1m19 0h1m19 0h1m19 0h1" stroke="#000" stroke-width="1" fill="none" shape-rendering="crispEdges"/>
<path d="M356 319.5H377M356 340.5H377M356.5 319V341M376.5 319V341M376 329.5H397M457.5 430V460M457.5 483V512M437 459.5H478M449 467.5H466M437 475.5H478M449 483.5H466M497 319.5H508M507.5 309V320M518 329.5H539M578 329.5H599M800 329.5H842M982 329.5H1003M1042 329.5H1064M1194 269.5H1215M1194 289.5H1215M1194.5 269V290M1214.5 269V290M1204.5 289V310M1315 340.5H1326M1315.5 329V341M681 451.5H700M681 491.5H700M684 471.5H700M699.5 471V492M671.5 451V492M659 491.5H672M639.5 531V542M639.5 582V593M699.5 552V563M699.5 602V613M800.5 552V563M800.5 602V613M740.5 673V694M720 693.5H761M728 699.5H753M736 705.5H745M941.5 350V361M941.5 400V411M941.5 451V466M927 465.5H956M941.5 473V492M946 456.5H955M950.5 452V461M1083.5 390V405M1069 404.5H1098M1083.5 412V431M1088 395.5H1097M1092.5 391V400M1204.5 430V441M1204.5 481V492M1305.5 390V406M1305.5 435V452M1299 405.5H1312M1299 435.5H1312M1299.5 405V436M1311.5 405V436M1285 501.5H1326M1285 541.5H1326M1285.5 501V542M1325.5 501V542M1305.5 491V516M1305.5 531V553M1325 511.5H1346M1325 531.5H1346M1330 502.5H1341M1335.5 497V508M1446.5 531V553M1446.5 592V613M1442 562.5H1451M1446.5 558V567M295 471.5H397M295 552.5H397M295.5 471V553M396.5 471V553M275 491.5H337M353 491.5H418M324 484.5H332M328.5 481V489M361 511.5H372M316 511.5H337M316.5 511V522M310 521.5H324M314 523.5H320M310 525.5H324M314 527.5H320M316.5 527V542M310 541.5H324M312 543.5H322M314 545.5H320M340 541.5H354M342 543.5H352M344 545.5H350M346.5 516V542M477 693.5H599M477 834.5H599M477.5 693V835M598.5 693V835M457 713.5H478M457 733.5H478M457 753.5H478M457 794.5H478M457 814.5H478M598 753.5H619M538.5 673V694M538.5 834V855M235.5 774V804M235.5 827V856M215 803.5H256M227 811.5H244M215 819.5H256M227 827.5H244M376 713.5H387M427 713.5H438M316.5 895V906M316.5 945V956M376.5 834V847M376.5 862V875M275.5 996V1009M275.5 1024V1037M639.5 1117V1138M619 1137.5H660M627 1143.5H652M635 1149.5H644M800.5 915V930M786 929.5H815M800.5 937V956M805 920.5H814M809.5 916V925M881.5 693V714M881.5 753V775M885 705.5H894M889.5 701V710M881.5 814V825M881.5 864V876M881.5 895V906M881.5 945V956M881.5 1016V1027M881.5 1066V1077M719 996.5H730M770 996.5H781M1164 794.5H1185M1022 794.5H1043M1083 778.5H1120M1083 798.5H1120M1083.5 778V799M1119.5 778V799" stroke="#ff0000" stroke-width="1" fill="none" shape-rendering="crispEdges"/>
<path d="M507.5 319.5L512.8 324.4M538.69 329.5a10.09 9.49 0 0 1 20.19 0a10.09 9.49 0 0 1 20.19 0M1002.69 329.5a10.09 9.49 0 0 1 20.19 0a10.09 9.49 0 0 1 20.19 0M1123.5 329.5L1132 338H1156L1164.5 329.5M1143.6 333.5L1152.6 338L1143.6 342.2M1305.5 350.5L1315.5 340.5M639.5 541.59L634.15 546.64L644.85 556.74L634.15 566.83L644.85 576.92L639.5 581.97M699.5 562.59L694.15 567.64L704.85 577.74L694.15 587.83L704.85 597.92L699.5 602.97M800.5 562.59L795.15 567.64L805.85 577.74L795.15 587.83L805.85 597.92L800.5 602.97M941.5 360.59L936.15 365.64L946.85 375.74L936.15 385.83L946.85 395.92L941.5 400.97M927.17 480.37Q941.5 467.04 955.83 480.37M1069.17 419.37Q1083.5 406.04 1097.83 419.37M1204.5 440.59L1199.15 445.64L1209.85 455.74L1199.15 465.83L1209.85 475.92L1204.5 480.97M1295.25 511.66L1305.34 531.84M1436 582.5h3v-10h15v10h3M336.5 481.5L336.5 521.5L368.8 501.5ZM344 505.5h4.6M346.5 505.5v-8M348.5 505.5v-8M346.5 497.5h4.6M386.59 713.5L391.64 718.85L401.74 708.15L411.83 718.85L421.92 708.15L426.97 713.5M316.5 905.59L311.15 910.64L321.85 920.74L311.15 930.83L321.85 940.92L316.5 945.97M786.17 944.37Q800.5 931.04 814.83 944.37M869.3 733.5a6.1 6.3 0 0 1 12.2 0a6.1 6.3 0 0 0 12.2 0M881.5 824.59L876.15 829.64L886.85 839.74L876.15 849.83L886.85 859.92L881.5 864.97M881.5 905.59L876.15 910.64L886.85 920.74L876.15 930.83L886.85 940.92L881.5 945.97M881.5 1026.59L876.15 1031.64L886.85 1041.73L876.15 1051.83L886.85 1061.92L881.5 1066.97M729.59 996.5L734.64 1001.85L744.74 991.15L754.83 1001.85L764.92 991.15L769.97 996.5M1089 782.5H1107.5L1114 794.8" stroke="#ff0000" stroke-width="1.1" fill="none" stroke-linejoin="miter"/>
<circle cx="518.3" cy="329.5" r="7.7" fill="none" stroke="#ff0000" stroke-width="1.15"/>
<rect x="466" y="327" width="10" height="2" fill="#000"/>
<circle cx="538.69" cy="340.5" r="2.3" fill="none" stroke="#ff0000" stroke-width="0.9"/>
<path d="M813.5 314.5L826.5 329.5L813.5 344.5Z" fill="#ff0000"/>
<rect x="826" y="314.5" width="3" height="30" fill="#ff0000"/>
<circle cx="1002.69" cy="340.5" r="2.3" fill="none" stroke="#ff0000" stroke-width="0.9"/>
<rect x="1123" y="327" width="9" height="2" fill="#000"/>
<rect x="679" y="445" width="3" height="13" fill="#ff0000"/>
<rect x="679" y="465" width="3" height="13" fill="#ff0000"/>
<rect x="679" y="485" width="3" height="13" fill="#ff0000"/>
<path d="M682 471.5l7.5 -4.3v8.6z" fill="#ff0000"/>
<circle cx="1446.5" cy="572.5" r="20.2" fill="none" stroke="#ff0000" stroke-width="1.15"/>
<circle cx="358.3" cy="512.2" r="3.4" fill="none" stroke="#ff0000" stroke-width="1.15"/>
<rect x="364" y="846" width="25" height="4.6" fill="#ff0000"/>
<rect x="364" y="858" width="25" height="4.6" fill="#ff0000"/>
<rect x="263" y="1008" width="25" height="4.6" fill="#ff0000"/>
<rect x="263" y="1020" width="25" height="4.6" fill="#ff0000"/>
<circle cx="881.5" cy="733.5" r="20.2" fill="none" stroke="#ff0000" stroke-width="1.15"/>
<rect x="916.5" y="668.5" width="10" height="10" fill="none" stroke="#ff0000" shape-rendering="crispEdges"/>
<rect x="916.5" y="789.5" width="10" height="10" fill="none" stroke="#ff0000" shape-rendering="crispEdges"/>
<rect x="1042.5" y="770.5" width="122" height="64" rx="6.5" fill="none" stroke="#ff0000" stroke-width="1.15"/>
<path d="M396 329.5H519M396.5 329V411M396 410.5H458M457.5 410V431M457.5 511V633M457 632.5H1447M598 329.5H801M841 329.5H983M1063 329.5H1124M1164 329.5H1205M1204.5 309V431M1204 350.5H1306M699.5 329V452M639 491.5H660M639.5 491V532M639.5 592V754M618 753.5H640M699.5 491V553M699.5 612V633M699 531.5H801M800.5 531V553M800.5 612V916M740.5 632V674M941.5 329V351M941.5 410V452M941.5 491V633M1083.5 329V391M1083.5 430V633M1204.5 491V633M1305.5 350V391M1305.5 451V492M1305.5 552V633M1345 511.5H1447M1446.5 511V532M1345 531.5H1366M1365.5 531V633M1446.5 612V633M275.5 491V997M235 673.5H539M235.5 673V775M235.5 854V1098M235 1097.5H882M881.5 1076V1098M275 713.5H377M437 713.5H458M275 733.5H458M417 753.5H458M417.5 753V997M316 794.5H458M316.5 794V896M316.5 955V997M316 996.5H720M780 996.5H882M376.5 794V835M376.5 875V997M437 814.5H458M437.5 814V876M437 875.5H801M538.5 854V1098M275.5 1036V1098M639.5 1097V1118M800.5 955V1098M881.5 329V694M881.5 774V815M881.5 875V896M881.5 955V1017M881 673.5H1245M1244.5 673V795M1184 794.5H1245M881 794.5H1023" stroke="#009900" stroke-width="1" fill="none" shape-rendering="crispEdges"/>
<path d="M393 326h7v7h-7zM515 326h7v7h-7zM696 326h7v7h-7zM878 326h7v7h-7zM938 326h7v7h-7zM1080 326h7v7h-7zM1201 326h7v7h-7zM1201 347h7v7h-7zM1302 347h7v7h-7zM696 528h7v7h-7zM696 629h7v7h-7zM737 629h7v7h-7zM938 629h7v7h-7zM1080 629h7v7h-7zM1201 629h7v7h-7zM1302 629h7v7h-7zM1362 629h7v7h-7zM272 710h7v7h-7zM272 730h7v7h-7zM414 993h7v7h-7zM373 791h7v7h-7zM373 993h7v7h-7zM797 872h7v7h-7zM535 1094h7v7h-7zM272 1094h7v7h-7zM636 1094h7v7h-7zM797 1094h7v7h-7zM878 670h7v7h-7zM878 791h7v7h-7zM878 993h7v7h-7zM918 670h7v7h-7zM918 791h7v7h-7z" fill="#009900" shape-rendering="crispEdges"/>
<g font-family="'Liberation Sans',sans-serif" fill="#000">
<text x="351.45" y="332.4" font-size="14.6" text-anchor="end" letter-spacing="0.45">VIN</text>
<text x="482" y="443.4" font-size="14.6" letter-spacing="0.45">V3</text>
<text x="482" y="461.3" font-size="14.6" letter-spacing="0.45">34</text>
<text x="460.6" y="324.6" font-size="17.4" letter-spacing="0.5">I_IN</text>
<text x="518" y="313.5" font-size="14" fill="#ff0000" font-family="'Liberation Mono',monospace" stroke="#fff" stroke-width="0.2" letter-spacing="0.5">ML</text>
<text x="557.43" y="283.1" font-size="14.6" text-anchor="middle" letter-spacing="0.45">ESR={10m*N*N}</text>
<text x="557.43" y="301" font-size="14.6" text-anchor="middle" letter-spacing="0.45">{200u*N}</text>
<text x="557.43" y="359.5" font-size="14.6" text-anchor="middle" letter-spacing="0.45">L1</text>
<text x="557.73" y="377.4" font-size="14.6" text-anchor="middle" letter-spacing="0.45">IC=1.4</text>
<text x="820.62" y="311.9" font-size="14.6" text-anchor="middle" letter-spacing="0.45">D1</text>
<text x="821.02" y="361.5" font-size="14.6" text-anchor="middle" letter-spacing="0.45">BYW80-200</text>
<text x="982" y="313.5" font-size="14" fill="#ff0000" font-family="'Liberation Mono',monospace" stroke="#fff" stroke-width="0.2" letter-spacing="0.5">ML</text>
<text x="1022.83" y="282.1" font-size="14.6" text-anchor="middle" letter-spacing="0.45">ESR=10m</text>
<text x="1021.73" y="300.1" font-size="14.6" text-anchor="middle" letter-spacing="0.45">5u</text>
<text x="1021.73" y="359.7" font-size="14.6" text-anchor="middle" letter-spacing="0.45">L2</text>
<text x="1022.52" y="377.5" font-size="14.6" text-anchor="middle" letter-spacing="0.45">IC=1.9</text>
<text x="1116.4" y="325" font-size="17.4" letter-spacing="0.5">I_OUT</text>
<text x="1204.22" y="264.7" font-size="14.6" text-anchor="middle" letter-spacing="0.45">VOUT</text>
<text x="1328.6" y="344.7" font-size="17.4" letter-spacing="0.5">VOUT</text>
<text x="679.43" y="440.6" font-size="14.6" text-anchor="middle" letter-spacing="0.45">IRF530</text>
<text x="679.43" y="515.9" font-size="14.6" text-anchor="middle" letter-spacing="0.45">Q2</text>
<text x="648.5" y="544.9" font-size="14.6" letter-spacing="0.45">R11</text>
<text x="648.5" y="562.3" font-size="14.6" letter-spacing="0.45">50</text>
<text x="690.65" y="564.9" font-size="14.6" text-anchor="end" letter-spacing="0.45">R10</text>
<text x="690.65" y="582.5" font-size="14.6" text-anchor="end" letter-spacing="0.45">75m</text>
<text x="791.25" y="564.7" font-size="14.6" text-anchor="end" letter-spacing="0.45">R13</text>
<text x="791.25" y="582.5" font-size="14.6" text-anchor="end" letter-spacing="0.45">1K</text>
<text x="918" y="459.7" font-size="14" fill="#ff0000" font-family="'Liberation Mono',monospace" stroke="#fff" stroke-width="0.2" letter-spacing="0.5">ML</text>
<text x="951.2" y="362.5" font-size="14.6" letter-spacing="0.45">R20</text>
<text x="951.2" y="380.7" font-size="14.6" letter-spacing="0.45">100m</text>
<text x="914.45" y="463.2" font-size="14.6" text-anchor="end" letter-spacing="0.45">IC=48</text>
<text x="960.2" y="463.2" font-size="14.6" letter-spacing="0.45">C6</text>
<text x="960.2" y="481.2" font-size="14.6" letter-spacing="0.45">470u</text>
<text x="960.2" y="498.4" font-size="14.6" letter-spacing="0.45">RLK=100Meg</text>
<text x="960.2" y="515.6" font-size="14.6" letter-spacing="0.45">ESR=30m</text>
<text x="1060" y="398.7" font-size="14" fill="#ff0000" font-family="'Liberation Mono',monospace" stroke="#fff" stroke-width="0.2" letter-spacing="0.5">ML</text>
<text x="1056.25" y="403.2" font-size="14.6" text-anchor="end" letter-spacing="0.45">IC=48</text>
<text x="1101" y="403.2" font-size="14.6" letter-spacing="0.45">C5</text>
<text x="1101" y="420.4" font-size="14.6" letter-spacing="0.45">200u</text>
<text x="1101" y="437.6" font-size="14.6" letter-spacing="0.45">RLK=100Meg</text>
<text x="1101" y="455.4" font-size="14.6" letter-spacing="0.45">ESR=20m</text>
<text x="1213.3" y="443.3" font-size="14.6" letter-spacing="0.45">R19</text>
<text x="1213.3" y="461.5" font-size="14.6" letter-spacing="0.45">50</text>
<text x="1315.3" y="403.2" font-size="14.6" letter-spacing="0.45">R1</text>
<text x="1315.3" y="420.4" font-size="14.6" letter-spacing="0.45">50</text>
<text x="1262" y="504.5" font-size="14.6" letter-spacing="0.45">S1</text>
<text x="1470.6" y="544.5" font-size="14.6" letter-spacing="0.45">V4</text>
<text x="301.6" y="466.8" font-size="14.6" letter-spacing="0.45">POP Trigger</text>
<text x="259.3" y="787" font-size="14.6" letter-spacing="0.45">V1</text>
<text x="259.3" y="804.8" font-size="14.6" letter-spacing="0.45">16.5</text>
<text x="407.23" y="703.7" font-size="14.6" text-anchor="middle" letter-spacing="0.45">18K</text>
<text x="407.23" y="737.1" font-size="14.6" text-anchor="middle" letter-spacing="0.45">R12</text>
<text x="623" y="685.8" font-size="14.6" letter-spacing="0.45">U1</text>
<text x="623" y="703.7" font-size="14.6" letter-spacing="0.45">UC3842</text>
<text x="487.6" y="713.6" font-size="14.6" letter-spacing="0.45">Refv</text>
<text x="528" y="710.7" font-size="14.6" letter-spacing="0.45">Vp</text>
<text x="487.6" y="734.2" font-size="14.6" letter-spacing="0.45">Osc</text>
<text x="487.6" y="754.1" font-size="14.6" letter-spacing="0.45">Vfb</text>
<text x="555" y="754.1" font-size="14.6" letter-spacing="0.45">Vout</text>
<text x="487.6" y="794.3" font-size="14.6" letter-spacing="0.45">Comp</text>
<text x="487.6" y="815.1" font-size="14.6" letter-spacing="0.45">Sense</text>
<text x="523.2" y="828.9" font-size="14.6" letter-spacing="0.45">Gnd</text>
<text x="393.3" y="848" font-size="14.6" letter-spacing="0.45">C1</text>
<text x="393.3" y="865.5" font-size="14.6" letter-spacing="0.45">{c1} IC=0</text>
<text x="325.3" y="908.4" font-size="14.6" letter-spacing="0.45">R16</text>
<text x="325.3" y="926" font-size="14.6" letter-spacing="0.45">{R16}</text>
<text x="292.2" y="1008.7" font-size="14.6" letter-spacing="0.45">C7</text>
<text x="292.2" y="1026.6" font-size="14.6" letter-spacing="0.45">{C7} IC=0</text>
<text x="263.3" y="1006.2" font-size="10.5" font-weight="bold">+</text>
<text x="777" y="923.7" font-size="14" fill="#ff0000" font-family="'Liberation Mono',monospace" stroke="#fff" stroke-width="0.2" letter-spacing="0.5">ML</text>
<text x="819.2" y="928.1" font-size="14.6" letter-spacing="0.45">C8</text>
<text x="819.2" y="945.8" font-size="14.6" letter-spacing="0.45">1n</text>
<text x="819.2" y="962.9" font-size="14.6" letter-spacing="0.45">RLK=1G</text>
<text x="819.2" y="980.6" font-size="14.6" letter-spacing="0.45">ESR=50</text>
<text x="905" y="706.9" font-size="14.6" letter-spacing="0.45">V2</text>
<text x="905" y="724" font-size="14.6" letter-spacing="0.45">AC 1</text>
<text x="890.2" y="827.2" font-size="14.6" letter-spacing="0.45">R17</text>
<text x="890.2" y="844.8" font-size="14.6" letter-spacing="0.45">7.5K</text>
<text x="890.5" y="908.3" font-size="14.6" letter-spacing="0.45">R15</text>
<text x="890.5" y="925.7" font-size="14.6" letter-spacing="0.45">2.75K</text>
<text x="890.5" y="1029.1" font-size="14.6" letter-spacing="0.45">R14</text>
<text x="890.5" y="1046.4" font-size="14.6" letter-spacing="0.45">560</text>
<text x="749.73" y="986.7" font-size="14.6" text-anchor="middle" letter-spacing="0.45">{r18}</text>
<text x="750.43" y="1019.3" font-size="14.6" text-anchor="middle" letter-spacing="0.45">R18</text>
<text x="931.5" y="680.7" font-size="14.6" letter-spacing="0.45">LG_OUT</text>
<text x="931.5" y="801.7" font-size="14.6" letter-spacing="0.45">LG_IN</text>
<text x="1051.6" y="794" font-size="17.4" letter-spacing="0.4">IN</text>
<text x="1125" y="794" font-size="17.4" letter-spacing="0.4">OUT</text>
<text x="1105.7" y="825.6" font-size="20.2" text-anchor="middle">=OUT/IN</text>
</g>
</g>
<g id="icons">
<defs>
<linearGradient id="gR" x1="0" y1="0" x2="1" y2="1"><stop offset="0" stop-color="#f00000"/><stop offset="1" stop-color="#8a0000"/></linearGradient>
<linearGradient id="gRu" gradientUnits="userSpaceOnUse" x1="0" y1="82" x2="0" y2="112"><stop offset="0" stop-color="#f20000"/><stop offset="1" stop-color="#800000"/></linearGradient>
<linearGradient id="gRd" gradientUnits="userSpaceOnUse" x1="0" y1="82" x2="30" y2="112"><stop offset="0" stop-color="#ee0000"/><stop offset="1" stop-color="#8a0000"/></linearGradient>
<linearGradient id="gDoc" x1="0" y1="0" x2="1" y2="1"><stop offset="0" stop-color="#ffffff"/><stop offset="1" stop-color="#dcdcdc"/></linearGradient>
<linearGradient id="gFb" x1="0" y1="0" x2="1" y2="1"><stop offset="0" stop-color="#ecd6a6"/><stop offset="1" stop-color="#d8ae62"/></linearGradient>
<linearGradient id="gFf" x1="0" y1="0" x2="1" y2="1"><stop offset="0" stop-color="#e3bc6e"/><stop offset="1" stop-color="#d89a28"/></linearGradient>
<linearGradient id="gK" x1="0" y1="0" x2="1" y2="1"><stop offset="0" stop-color="#4a4a4a"/><stop offset="1" stop-color="#0c0c0c"/></linearGradient>
<linearGradient id="gB" x1="0" y1="0" x2="1" y2="1"><stop offset="0" stop-color="#0a78ff"/><stop offset="0.5" stop-color="#1038ff"/><stop offset="1" stop-color="#1a1ad0"/></linearGradient>
<linearGradient id="gU" x1="0" y1="0" x2="1" y2="1"><stop offset="0" stop-color="#4c78e4"/><stop offset="1" stop-color="#2a22cc"/></linearGradient>
<linearGradient id="gP" x1="0" y1="0" x2="0" y2="1"><stop offset="0" stop-color="#b8b8b8"/><stop offset="1" stop-color="#7c7c7c"/></linearGradient>
<linearGradient id="gL" x1="0" y1="0" x2="1" y2="1"><stop offset="0" stop-color="#d6e8ff"/><stop offset="1" stop-color="#7fb0ee"/></linearGradient>
<linearGradient id="gPen" x1="0" y1="0" x2="1" y2="1"><stop offset="0" stop-color="#8aa0ff"/><stop offset="0.5" stop-color="#2038e8"/><stop offset="1" stop-color="#1018a8"/></linearGradient>
<linearGradient id="gBin" x1="0" y1="0" x2="1" y2="1"><stop offset="0" stop-color="#808080"/><stop offset="1" stop-color="#4a4a4a"/></linearGradient>
</defs>
<rect x="321" y="81" width="1" height="32" fill="#cdcdcd"/>
<rect x="404" y="81" width="1" height="32" fill="#cdcdcd"/>
<rect x="635" y="81" width="1" height="32" fill="#cdcdcd"/>
<rect x="792" y="81" width="1" height="32" fill="#cdcdcd"/>
<rect x="838" y="81" width="1" height="32" fill="#cdcdcd"/>
<rect x="884" y="81" width="1" height="32" fill="#cdcdcd"/>
<rect x="930" y="81" width="1" height="32" fill="#cdcdcd"/>
<rect x="1346" y="81" width="1" height="32" fill="#cdcdcd"/>
<path d="M9.5 82.5h18l5 5v24h-23z" fill="url(#gDoc)" stroke="#8c8c8c"/><path d="M27.5 82.5v5h5" fill="#f4f4f4" stroke="#9a9a9a" stroke-width="0.8"/>
<path d="M43 94h11.4l-5.7 6.4z" fill="#000"/>
<path d="M61.5 83.5h10.2l1.6 2h13.5v25h-25.3z" fill="url(#gFb)" stroke="#8a6a2c" stroke-width="0.9"/>
<path d="M61.6 110.6l3.6-17.9h8.6l1.8-1.9h15l-3.6 19.8z" fill="url(#gFf)" stroke="#5c3e0a" stroke-width="0.9"/>
<path d="M100.8 84.6L125.4 109.2M125.4 84.6L100.8 109.2" stroke="url(#gK)" stroke-width="4" fill="none"/>
<rect x="136.3" y="82.2" width="27.6" height="29.4" rx="2.2" fill="url(#gB)" stroke="#0a1a9a" stroke-width="0.7"/><rect x="139.9" y="82.6" width="20.2" height="14.4" fill="#f2f2f2" stroke="#c8c8c8" stroke-width="0.5"/><rect x="143.7" y="102.4" width="13.0" height="9.2" fill="#a8a8a8" stroke="#6a5a3a" stroke-width="0.5"/><rect x="145.6" y="103.2" width="3.8" height="7.3" fill="#1038ff"/>
<rect x="182.2" y="83.3" width="17.7" height="18.8" rx="1.4" fill="url(#gB)" stroke="#0a1a9a" stroke-width="0.7"/><rect x="184.5" y="83.7" width="12.9" height="9.2" fill="#f2f2f2" stroke="#c8c8c8" stroke-width="0.5"/><rect x="186.9" y="96.2" width="8.3" height="5.9" fill="#a8a8a8" stroke="#6a5a3a" stroke-width="0.5"/><rect x="188.2" y="96.7" width="2.4" height="4.7" fill="#1038ff"/>
<rect x="178.4" y="87.1" width="17.7" height="18.8" rx="1.4" fill="url(#gB)" stroke="#0a1a9a" stroke-width="0.7"/><rect x="180.7" y="87.5" width="12.9" height="9.2" fill="#f2f2f2" stroke="#c8c8c8" stroke-width="0.5"/><rect x="183.1" y="100.0" width="8.3" height="5.9" fill="#a8a8a8" stroke="#6a5a3a" stroke-width="0.5"/><rect x="184.4" y="100.5" width="2.4" height="4.7" fill="#1038ff"/>
<rect x="174.6" y="91.1" width="17.7" height="18.8" rx="1.4" fill="url(#gB)" stroke="#0a1a9a" stroke-width="0.7"/><rect x="176.9" y="91.5" width="12.9" height="9.2" fill="#f2f2f2" stroke="#c8c8c8" stroke-width="0.5"/><rect x="179.3" y="104.0" width="8.3" height="5.9" fill="#a8a8a8" stroke="#6a5a3a" stroke-width="0.5"/><rect x="180.6" y="104.5" width="2.4" height="4.7" fill="#1038ff"/>
<rect x="216.2" y="84.1" width="15.6" height="10" fill="#f4f4f4" stroke="#9a9a9a" stroke-width="0.8"/>
<rect x="211.2" y="91.3" width="25.5" height="14.5" rx="3.2" fill="url(#gP)" stroke="#7a7a7a" stroke-width="0.7"/>
<rect x="216" y="92" width="16" height="2" fill="#e6e6e6"/><rect x="217.3" y="94.5" width="13.4" height="2.8" fill="#9a9a9a" stroke="#777" stroke-width="0.5"/>
<rect x="216.2" y="103.9" width="15.6" height="5.8" fill="#f6f6f6" stroke="#8a8a8a" stroke-width="0.8"/><rect x="219" y="106.6" width="10" height="1.2" fill="#333"/>
<path d="M259.3 85.3L262.3 85.3L262.7 88.7L265.1 89.7L267.8 87.6L270.0 89.8L267.9 92.5L268.9 94.9L272.3 95.3L272.3 98.3L268.9 98.7L267.9 101.1L270.0 103.8L267.8 106.0L265.1 103.9L262.7 104.9L262.3 108.3L259.3 108.3L258.9 104.9L256.5 103.9L253.8 106.0L251.6 103.8L253.7 101.1L252.7 98.7L249.3 98.3L249.3 95.3L252.7 94.9L253.7 92.5L251.6 89.8L253.8 87.6L256.5 89.7L258.9 88.7ZM256.5 96.8a4.3 4.3 0 1 0 8.6 0a4.3 4.3 0 1 0 -8.6 0z" fill="url(#gK)" fill-rule="evenodd" stroke="#222" stroke-width="1.2" stroke-linejoin="round"/>
<path d="M296.3 85.3L299.3 85.3L299.7 88.7L302.1 89.7L304.8 87.6L307.0 89.8L304.9 92.5L305.9 94.9L309.3 95.3L309.3 98.3L305.9 98.7L304.9 101.1L307.0 103.8L304.8 106.0L302.1 103.9L299.7 104.9L299.3 108.3L296.3 108.3L295.9 104.9L293.5 103.9L290.8 106.0L288.6 103.8L290.7 101.1L289.7 98.7L286.3 98.3L286.3 95.3L289.7 94.9L290.7 92.5L288.6 89.8L290.8 87.6L293.5 89.7L295.9 88.7ZM293.5 96.8a4.3 4.3 0 1 0 8.6 0a4.3 4.3 0 1 0 -8.6 0z" fill="url(#gK)" fill-rule="evenodd" stroke="#222" stroke-width="1.2" stroke-linejoin="round"/>
<ellipse cx="301.9" cy="105.8" rx="9" ry="4.3" fill="#1a6ae2"/><path d="M297 102q5 0.8 3.2 3.6t2.4 4.4l5-0.3q-4-1.8-2.6-4.4t-3-3.8z" fill="#fff"/>
<path d="M0 7L7.4 0V3.3H15.2C21.6 3.3 26.5 8 26.5 14C26.5 19 25 23 24.1 25.8H13.3V18.8C16.5 18.5 18.6 16.8 18.6 14.4C18.6 12 17.5 10.8 15.5 10.8H7.4V14.2Z" transform="translate(330.8 84.1)" fill="url(#gU)"/>
<path d="M0 7L7.4 0V3.3H15.2C21.6 3.3 26.5 8 26.5 14C26.5 19 25 23 24.1 25.8H13.3V18.8C16.5 18.5 18.6 16.8 18.6 14.4C18.6 12 17.5 10.8 15.5 10.8H7.4V14.2Z" transform="translate(394.4 84.1) scale(-1 1)" fill="url(#gU)"/>
<path d="M422.5 82.5h16a3.2 3.2 0 0 1 3.2 3.2v16.6h-19.2z" fill="#eeee00" stroke="#111" stroke-width="0.9"/>
<path d="M412.5 91.6h16a3.2 3.2 0 0 1 3.2 3.2v16.8h-16a3.2 3.2 0 0 1-3.2-3.2z" fill="url(#gDoc)" stroke="#222" stroke-width="0.9"/>
<path d="M416.8 101.5h10.6M422.1 96.2v10.6" stroke="#222" stroke-width="1.6"/>
<path d="M449.6 90.4V82.6H465.8a3.2 3.2 0 0 1 3.2 3.2V111.4H452.8a3.2 3.2 0 0 1-3.2-3.2V107H459.4V90.4Z" fill="url(#gDoc)" stroke="#222" stroke-width="0.9"/>
<rect x="458.9" y="91.3" width="17.8" height="14.8" fill="#eeee00" stroke="#111" stroke-width="0.9"/><path d="M461 98.7h9" stroke="#111" stroke-width="1.8"/><path d="M469 94.4l5.8 4.3-5.8 4.3z" fill="#111"/>
<path d="M486.4 82.4L502 99M515.8 82.4L500 99" stroke="#b4b4b4" stroke-width="2.6" fill="none"/>
<path d="M500.9 98.4L495.5 100.5M500.9 98.4L506.5 100.5" stroke="#c00000" stroke-width="3"/>
<ellipse cx="491.6" cy="105.2" rx="3.1" ry="5.6" transform="rotate(35 491.6 105.2)" fill="none" stroke="#c40000" stroke-width="2.4"/><ellipse cx="510.6" cy="105.2" rx="3.1" ry="5.6" transform="rotate(-35 510.6 105.2)" fill="none" stroke="#b00000" stroke-width="2.4"/>
<path d="M547.6 93.9A11 11 0 1 0 545 104.3" fill="none" stroke="url(#gK)" stroke-width="3.3"/><path d="M541.4 92.6L553.2 95.2L547.6 100.6z" fill="#222"/>
<path d="M575.2 82.2v29.8" stroke="#111" stroke-width="3.6" stroke-dasharray="5.6 1.9" stroke-dashoffset="3.2" fill="none"/>
<g stroke="url(#gRd)" fill="none" transform="translate(560 0)"><path d="M9 85v23.5M21.2 85v23.5" stroke-width="3.2"/><path d="M0.6 85.2L8 92.4M8 101.2L1.4 107.6M29.6 85.2L22.2 92.4M22.2 101.2L28.8 107.6" stroke-width="1.8"/></g>
<path d="M560.3 108.6v-5l5 5zM590 108.6v-5l-5 5z" fill="#c80000"/>
<path d="M597 97h30" stroke="#111" stroke-width="3.6" stroke-dasharray="5.6 1.9" stroke-dashoffset="3.2" fill="none"/>
<g stroke="url(#gRd)" fill="none" transform="translate(597 0)"><path d="M3.2 91h24M3.2 103h24" stroke-width="3.2"/><path d="M4 83L10.4 89.6M27 82.4L19 89.6M10.4 104.4L4 111M19 104.4L27 111.6" stroke-width="1.8"/></g>
<path d="M600.2 82.2h5l-5 5zM600.2 111.8h5l-5-5z" fill="#e00000"/>
<path d="M671.2 89.8v20.2h-20.4" fill="none" stroke="#d00000" stroke-width="1.6" stroke-dasharray="1.6 1.6"/>
<path d="M664.0 102.4l8.2 8" stroke="#8a4a0c" stroke-width="4.2" stroke-linecap="butt"/><path d="M662.4 101.2l2.6 2.6" stroke="#222" stroke-width="3.4"/><circle cx="656.0" cy="94.9" r="9.6" fill="url(#gL)" stroke="#303030" stroke-width="2.2"/>
<path d="M649.6 88.8h3.6v3.4h-3.6zM657 88.8h3.6v3.4h-3.6zM649.6 96.2h3.6v3.4h-3.6z" fill="#e00000"/>
<path d="M700.7 102.4l8.2 8" stroke="#8a4a0c" stroke-width="4.2" stroke-linecap="butt"/><path d="M699.1 101.2l2.6 2.6" stroke="#222" stroke-width="3.4"/><circle cx="692.7" cy="94.9" r="9.6" fill="url(#gL)" stroke="#303030" stroke-width="2.2"/>
<rect x="686.5" y="93.9" width="12.4" height="2" fill="#e00000"/>
<path d="M737.6 102.4l8.2 8" stroke="#8a4a0c" stroke-width="4.2" stroke-linecap="butt"/><path d="M736.0 101.2l2.6 2.6" stroke="#222" stroke-width="3.4"/><circle cx="729.6" cy="94.9" r="9.6" fill="url(#gL)" stroke="#303030" stroke-width="2.2"/>
<path d="M723.8 94.9h11.6M729.6 89.1v11.6" stroke="#e00000" stroke-width="2"/>
<path d="M774.6 102.4l8.2 8" stroke="#8a4a0c" stroke-width="4.2" stroke-linecap="butt"/><path d="M773.0 101.2l2.6 2.6" stroke="#222" stroke-width="3.4"/><circle cx="766.6" cy="94.9" r="9.6" fill="url(#gL)" stroke="#303030" stroke-width="2.2"/>
<rect x="761.9" y="90.1" width="9.8" height="9.8" fill="none" stroke="#d80000" stroke-width="2"/>
<path d="M802.4 109.6h17.4" stroke="#a8a8a8" stroke-width="1.2"/>
<path d="M806 101.2l16.8-16.6 5 5-16.8 16.6z" fill="url(#gPen)" stroke="#1a1a8a" stroke-width="0.6"/><path d="M822.8 84.6l2.2-2.2 5 5-2.2 2.2z" fill="#e88a90" stroke="#a05058" stroke-width="0.5"/><path d="M806 101.2l5 5-8.6 3.4z" fill="#e0a050" stroke="#8a5a20" stroke-width="0.5"/><path d="M802.4 109.6l2.4-1 -1.4-1.4z" fill="#222"/>
<path d="M851.4 84.1v25.8l21-12.9z" fill="url(#gK)"/>
<g fill="url(#gBin)" stroke="#3a3a3a" stroke-width="0.7"><rect x="900" y="84.2" width="4.8" height="6"/><rect x="909.3" y="84.2" width="4.8" height="6"/><path d="M898.6 90.4h7.4v6.6h-9.6v-3.6zM908 90.4h7.4l2.2 3v3.6h-9.6z"/><path d="M897.2 97h7v12.8h-9.2zM909.6 97h7l2.2 12.8h-9.2z"/><rect x="905.2" y="90" width="3.4" height="7.2" fill="#333"/></g>
<path d="M953 82.2v5.2M953 106v5.8" stroke="url(#gRu)" stroke-width="2" fill="none"/><rect x="949.3" y="88.3" width="7.4" height="16.8" fill="none" stroke="url(#gRu)" stroke-width="1.9"/>
<path d="M990 82.2v9.4M990 102.6v9.2" stroke="url(#gRu)" stroke-width="2"/><rect x="981.7" y="91.6" width="16.5" height="3.3" fill="url(#gRu)"/><rect x="981.7" y="99.4" width="16.5" height="3.3" fill="url(#gRu)"/>
<path d="M1012 97h5.2c0-8 9.8-8 9.8 0c0-8 9.8-8 9.8 0h5" fill="none" stroke="url(#gR)" stroke-width="2"/>
<g fill="url(#gRu)"><rect x="1062.1" y="86" width="3.8" height="9.4"/><rect x="1051.1" y="94.9" width="25.9" height="2.3"/><rect x="1054.9" y="99.3" width="18.3" height="1.8"/><rect x="1058.7" y="102.8" width="10.9" height="1.8"/><rect x="1062.1" y="106.3" width="3.8" height="1.8"/></g>
<g fill="url(#gRu)" transform="translate(1088 0)"><rect x="8.6" y="86.9" width="1.6" height="19.9"/><rect x="0.2" y="105.2" width="10" height="1.6"/><rect x="16" y="84.1" width="1.7" height="6.6"/><rect x="16" y="93.5" width="1.7" height="7"/><rect x="16" y="103.2" width="1.7" height="6.7"/><rect x="17.6" y="87" width="8.4" height="1.5"/><rect x="17.6" y="105.4" width="8.4" height="1.5"/><rect x="20" y="96.3" width="6" height="1.5"/><path d="M17.8 97l4.2-3.4v6.8z"/></g>
<g fill="url(#gRu)" transform="translate(1125.1 0)"><rect x="8.6" y="86.9" width="1.6" height="19.9"/><rect x="0.2" y="105.2" width="10" height="1.6"/><rect x="16" y="84.1" width="1.7" height="6.6"/><rect x="16" y="93.5" width="1.7" height="7"/><rect x="16" y="103.2" width="1.7" height="6.7"/><rect x="17.6" y="87" width="8.4" height="1.5"/><rect x="17.6" y="105.4" width="8.4" height="1.5"/><rect x="17.6" y="96.3" width="5" height="1.5"/><path d="M26.4 97l-4.4-3.4v6.8z"/></g>
<g fill="url(#gRd)" transform="translate(1162 0)"><rect x="12.2" y="84.1" width="2" height="25.7"/><path d="M0.8 88h24.5l-12.2 12.8z"/><rect x="0.8" y="102" width="24.5" height="3.9"/></g>
<g fill="url(#gRu)"><rect x="1210.8" y="84.1" width="2" height="4.6"/><rect x="1210.8" y="105" width="2" height="4.8"/><rect x="1199.9" y="88.3" width="24.2" height="2"/><rect x="1205.7" y="92.5" width="12.8" height="3.3"/><rect x="1199.9" y="97.8" width="24.2" height="2"/><rect x="1205.7" y="102" width="12.8" height="3.3"/></g>
<g fill="none" stroke="url(#gRu)" stroke-width="2"><circle cx="1248.9" cy="96.5" r="10.8"/><path d="M1248.9 82.2v3.4M1248.9 107.4v4"/><path d="M1241.6 96.8c1.8-6.4 5.4-6.4 7.3-0.3s5.4 6.4 7.3 0"/></g>
<path d="M1276 82.2v3.2M1276 108.4v3.4M1295.8 82.2v3.2M1295.8 108.4v3.4" stroke="url(#gRu)" stroke-width="1.8"/>
<path d="M1275.6 82.4h1.6c4.6 0.4 4.6 5.2 0 5.8c4.6 0.4 4.6 5.2 0 5.8c4.6 0.4 4.6 5.2 0 5.8c4.6 0.4 4.6 5.2 0 5.8h-1.6" fill="none" stroke="url(#gRu)" stroke-width="1.7" transform="translate(0 2)"/>
<path d="M1296.2 82.4h-1.6c-4.6 0.4 -4.6 5.2 0 5.8c-4.6 0.4 -4.6 5.2 0 5.8c-4.6 0.4 -4.6 5.2 0 5.8c-4.6 0.4 -4.6 5.2 0 5.8h1.6" fill="none" stroke="url(#gRu)" stroke-width="1.7" transform="translate(0 2)"/>
<path d="M1322.9 85.6v11.4h11.4M1322.9 97L1312 107.9" fill="none" stroke="#c80000" stroke-width="2"/>
<g stroke="#c00000" fill="none" transform="translate(1356.6 0)"><path d="M7.2 99.4L21 84.6M10.8 102.4L24.6 87.6" stroke-width="1.7"/><path d="M0.4 108.8L7 101.6" stroke-width="2"/><path d="M5.6 100.8l3.8 3.4M7.2 99.4l3.6 3" stroke-width="1.3"/></g>
<g stroke="#c00000" fill="none" transform="translate(1504.4 0)"><path d="M7.2 99.4L21 84.6M10.8 102.4L24.6 87.6" stroke-width="1.7"/><path d="M0.4 108.8L7 101.6" stroke-width="2"/><path d="M5.6 100.8l3.8 3.4M7.2 99.4l3.6 3" stroke-width="1.3"/></g>
<circle cx="1405.7" cy="96.8" r="5.6" fill="none" stroke="#555" stroke-width="4.6"/><circle cx="1405.7" cy="96.8" r="5.6" fill="none" stroke="#b8b8b8" stroke-width="3.2"/>
<path d="M1412.6 96.8h8.4" stroke="#111" stroke-width="2.6"/><path d="M1391.8 111.2L1420.4 83" stroke="#c80000" stroke-width="2.9"/>
<path d="M1431.8 82.4h17.1l5.5 5.5v23.9h-22.6z" fill="url(#gDoc)" stroke="#8c8c8c"/><path d="M1448.8999999999999 82.4v5.5h5.5" fill="#f4f4f4" stroke="#9a9a9a" stroke-width="0.8"/>
<path d="M1433.4 97.2c3-8.6 6.6-8.4 9.8 0.2s7 8.4 10-1" fill="none" stroke="#d00000" stroke-width="2"/>
<path d="M1468.8 82.4h17.1l5.5 5.5v23.9h-22.6z" fill="url(#gDoc)" stroke="#8c8c8c"/><path d="M1485.8999999999999 82.4v5.5h5.5" fill="#f4f4f4" stroke="#9a9a9a" stroke-width="0.8"/>
<ellipse cx="1479.9" cy="97" rx="2.4" ry="6.4" fill="#e86a6a" opacity="0.45"/><path d="M1470.2 99.6h1.8l0.8-1.2 0.9 2.4 0.9-3.2 0.9 1.6M1489.6 99.6h-1.8l-0.8-1.2-0.9 2.4-0.9-3.2-0.9 1.6" fill="none" stroke="#d00000" stroke-width="0.9"/><path d="M1475.4 97v5M1484.4 97v5" stroke="#cc0000" stroke-width="1"/><path d="M1477.6 93.6v12.6M1482.2 93.6v12.6" stroke="#cc0000" stroke-width="1.3"/><path d="M1479.9 86.2v21.2" stroke="#d00000" stroke-width="1.7"/>
<path d="M1522 22.5h15" stroke="#000" stroke-width="1.2"/><rect x="1591.6" y="15.8" width="13.8" height="13.8" fill="none" stroke="#000" stroke-width="1.2"/><path d="M1662.2 15.4l14.6 14.6M1676.8 15.4l-14.6 14.6" stroke="#000" stroke-width="1.2"/>
<path d="M1687.8 55.4h11.2l-5.6 5.6z" fill="#0000ff"/>
<path d="M1658.8 124.6h14.6l-7.3 7.4z" fill="#000"/><path d="M1682.6 122.4l12.8 12.8M1695.4 122.4l-12.8 12.8" stroke="#000" stroke-width="4.2"/>
<path d="M30.6 13.8C25.6 13.4 24.2 17 23 21.8" fill="none" stroke="#ffb70a" stroke-width="4.6" stroke-linecap="round"/><path d="M23.2 21C21.9 26.2 20.2 31.4 13.2 32.2" fill="none" stroke="#ff0a0a" stroke-width="4.6"/>
</g>
</svg>
<div class="abs" style="left:0;top:0;width:1705px;height:1px;background:#0e4363"></div>
<div class="abs" style="left:0;top:0;width:1px;height:1306px;background:#14506f"></div><div class="abs" style="left:1px;top:1px;width:1px;height:1303px;background:rgba(20,80,111,0.18)"></div>
<div class="abs" style="left:0;top:1304px;width:280px;height:2px;background:#1f5a73"></div>
<div class="abs" style="left:280px;top:1304px;width:1425px;height:2px;background:#6e6e6e"></div>
<div class="abs" style="left:1704px;top:1px;width:1px;height:1305px;background:#5c6670"></div><div class="abs" style="left:1703px;top:76px;width:1px;height:1228px;background:#b8b8b8"></div>
</body></html>
